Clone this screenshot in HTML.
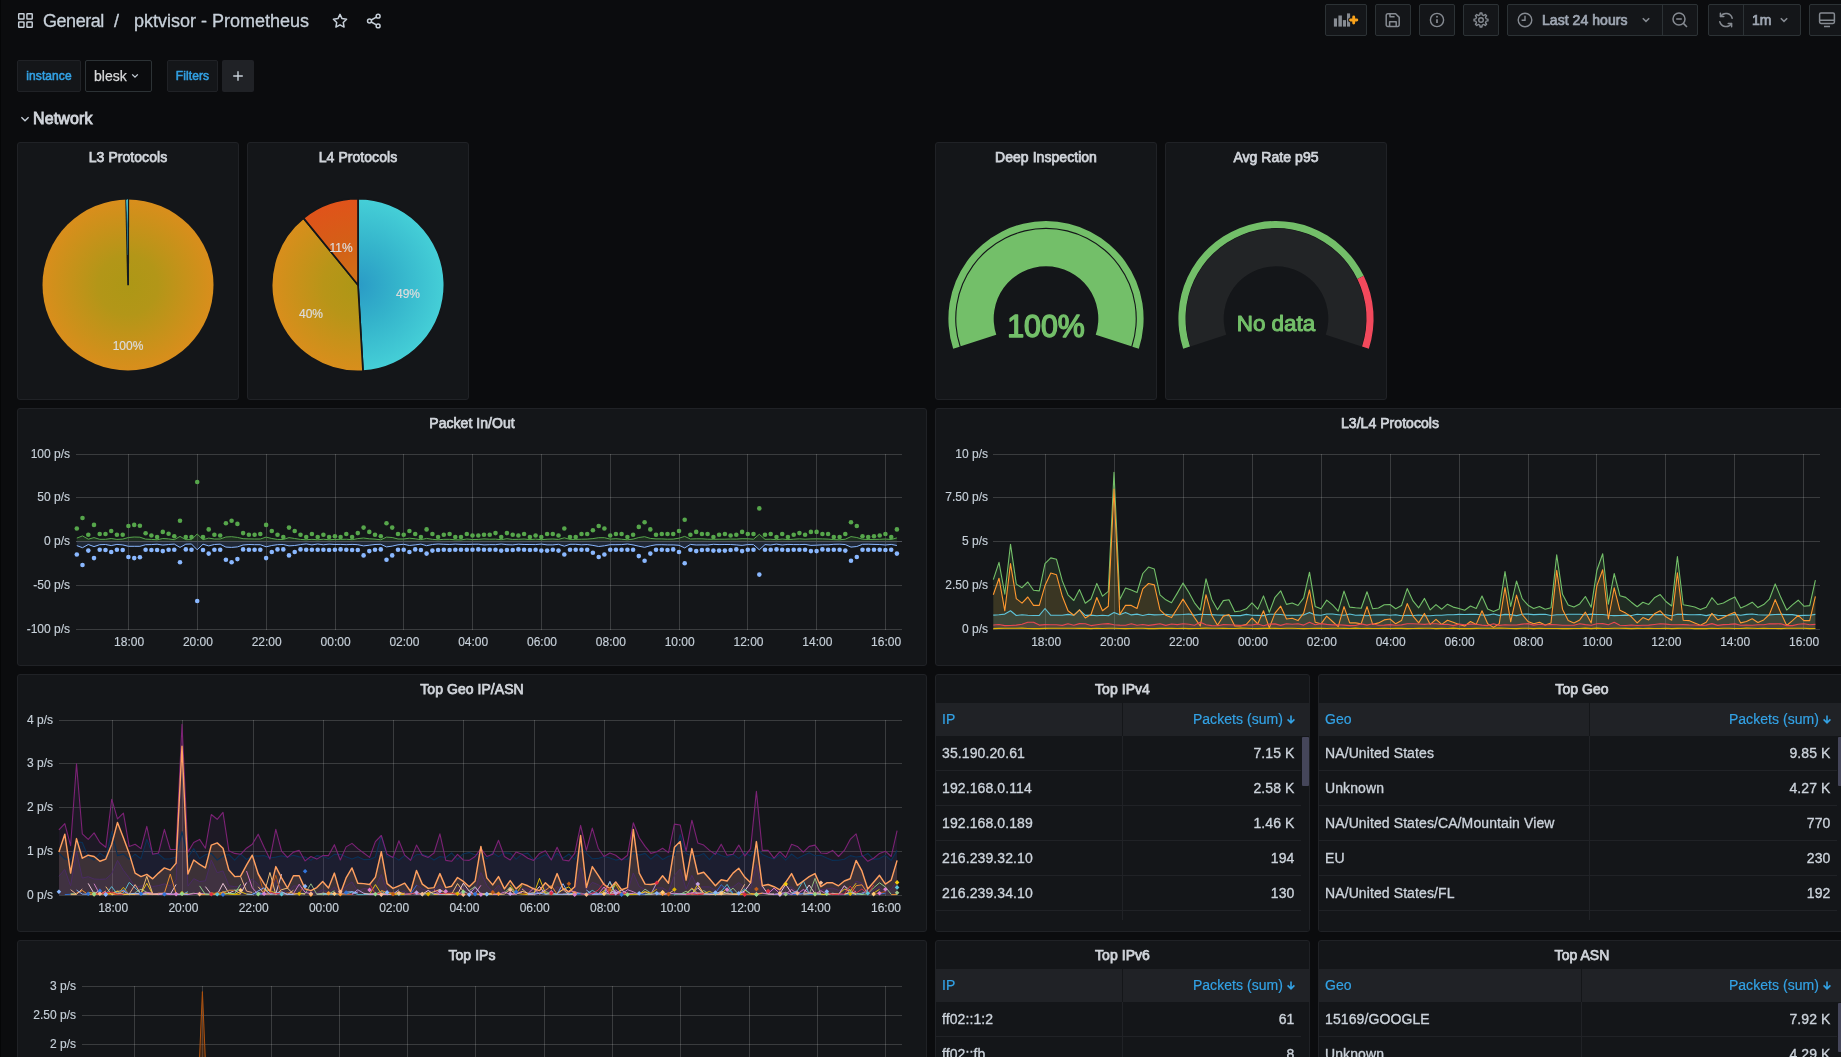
<!DOCTYPE html><html><head><meta charset="utf-8"><title>pktvisor - Prometheus - Grafana</title><style>
*{box-sizing:border-box;margin:0;padding:0}
html,body{width:1841px;height:1057px;overflow:hidden;background:#0b0c0e;font-family:"Liberation Sans", sans-serif;color:#c7d0d9}
#root{position:relative;width:1841px;height:1057px;overflow:hidden;background:#0b0c0e;will-change:transform}
.abs{position:absolute}
.panel{position:absolute;background:#141619;border:1px solid #202226;border-radius:3px;overflow:hidden}
.ptitle{position:absolute;left:0;right:0;top:0;height:28px;line-height:29px;text-align:center;font-size:14px;color:#d0d4da;-webkit-text-stroke:0.75px #d0d4da;letter-spacing:0.05px}
.tbtn{position:absolute;top:4px;height:32px;background:#141619;border:1px solid #2c3235;border-radius:2px}
svg{position:absolute;left:0;top:0;overflow:visible}
svg text{font-family:"Liberation Sans", sans-serif}
.ax{font-size:12px;fill:#c7d0d9;stroke:#c7d0d9;stroke-width:0.15px}
.th{position:absolute;height:33px;line-height:33px;background:#202226;color:#33a2e5;-webkit-text-stroke:0.2px #33a2e5;letter-spacing:0.05px;font-size:14px;white-space:nowrap}
.td{position:absolute;height:35px;line-height:34px;font-size:14px;color:#ccd3db;-webkit-text-stroke:0.33px #ccd3db;letter-spacing:0.1px;border-bottom:1px solid #202226;white-space:nowrap;overflow:hidden}
.r{text-align:right}
</style></head><body><div id="root">
<div class="abs" style="left:0;top:0;width:1px;height:1057px;background:#050607"></div>
<svg width="17.4" height="17.4" style="left:17.3px;top:11.9px" viewBox="0 0 18 18" fill="none" stroke="#c7d0d9" stroke-width="1.5">
<rect x="1.75" y="1.75" width="5.5" height="5.5" rx="0.6"/><rect x="10.25" y="1.75" width="5.5" height="5.5" rx="0.6"/>
<rect x="1.75" y="10.25" width="5.5" height="5.5" rx="0.6"/><rect x="10.25" y="10.25" width="5.5" height="5.5" rx="0.6"/></svg>
<div class="abs" style="left:43px;top:10px;height:22px;line-height:22px;font-size:18px;color:#c7d0d9;-webkit-text-stroke:0.3px #c7d0d9;white-space:nowrap"><span style="letter-spacing:-0.45px">General</span></div>
<div class="abs" style="left:114px;top:10px;height:22px;line-height:22px;font-size:18px;color:#c7d0d9;-webkit-text-stroke:0.3px #c7d0d9;white-space:nowrap">/</div>
<div class="abs" style="left:134px;top:10px;height:22px;line-height:22px;font-size:18px;color:#c7d0d9;-webkit-text-stroke:0.3px #c7d0d9;white-space:nowrap">pktvisor - Prometheus</div>
<svg width="18" height="18" style="left:331px;top:12px" viewBox="0 0 24 24" fill="none" stroke="#c7d0d9" stroke-width="2" stroke-linejoin="round"><path d="M12 3.2l2.7 5.6 6.1.85-4.45 4.3 1.07 6.1L12 17.15 6.58 20.05l1.07-6.1L3.2 9.65l6.1-.85z"/></svg>
<svg width="18" height="18" style="left:365px;top:12px" viewBox="0 0 24 24" fill="none" stroke="#c7d0d9" stroke-width="2"><circle cx="17.5" cy="5.5" r="2.6"/><circle cx="6" cy="12" r="2.6"/><circle cx="17.5" cy="18.5" r="2.6"/><path d="M8.3 10.7l6.9-3.9M8.3 13.3l6.9 3.9"/></svg>
<div class="tbtn" style="left:1325px;width:42px"></div>
<div class="tbtn" style="left:1375px;width:36px"></div>
<div class="tbtn" style="left:1419px;width:36px"></div>
<div class="tbtn" style="left:1463px;width:36px"></div>
<div class="tbtn" style="left:1507px;width:191px"></div>
<div class="tbtn" style="left:1708px;width:93px"></div>
<div class="tbtn" style="left:1809px;width:40px"></div>
<div class="abs" style="left:1662px;top:5px;width:1px;height:30px;background:#2c3235"></div>
<div class="abs" style="left:1743px;top:5px;width:1px;height:30px;background:#2c3235"></div>
<svg width="28" height="16" style="left:1333px;top:12px" viewBox="0 0 28 16"><g fill="#868b92"><rect x="0.9" y="6.4" width="3.1" height="8.2"/><rect x="5.4" y="3.5" width="3.5" height="11.1"/><rect x="9.9" y="8.1" width="3.1" height="6.5"/><rect x="14" y="1.4" width="3.1" height="13.2"/></g>
<path d="M20.7 4.9v6.2M17.6 8h6.2" stroke="#141619" stroke-width="5" stroke-linecap="round"/><path d="M20.7 4.9v6.2M17.6 8h6.2" stroke="#f9a21b" stroke-width="2.9" stroke-linecap="round"/></svg>
<svg width="16" height="16" style="left:1385px;top:12px" viewBox="0 0 16 16" fill="none" stroke="#868b92" stroke-width="1.5" stroke-linejoin="round"><path d="M2.6 1.8h8l3.6 3.6v7.4a1.6 1.6 0 0 1-1.6 1.6H2.8a1.6 1.6 0 0 1-1.6-1.6V3.4a1.6 1.6 0 0 1 1.6-1.6z"/><path d="M4.6 14.2v-4.4h6.6v4.4M5 1.9v2.9h4.6"/></svg>
<svg width="18" height="18" style="left:1428px;top:11px" viewBox="0 0 18 18" fill="none" stroke="#868b92" stroke-width="1.4"><circle cx="9" cy="9" r="6.6"/><path d="M9 8.3v3.8" stroke-width="1.7"/><circle cx="9" cy="5.8" r="0.95" fill="#868b92" stroke="none"/></svg>
<svg width="18" height="18" style="left:1472px;top:11px" viewBox="0 0 18 18" fill="none" stroke="#868b92" stroke-width="1.4" stroke-linejoin="round"><path d="M7.84 3.83 L8.07 2.06 L9.93 2.06 L10.16 3.83 L11.84 4.53 L13.25 3.44 L14.56 4.75 L13.47 6.16 L14.17 7.84 L15.94 8.07 L15.94 9.93 L14.17 10.16 L13.47 11.84 L14.56 13.25 L13.25 14.56 L11.84 13.47 L10.16 14.17 L9.93 15.94 L8.07 15.94 L7.84 14.17 L6.16 13.47 L4.75 14.56 L3.44 13.25 L4.53 11.84 L3.83 10.16 L2.06 9.93 L2.06 8.07 L3.83 7.84 L4.53 6.16 L3.44 4.75 L4.75 3.44 L6.16 4.53Z"/><circle cx="9" cy="9" r="2.3"/></svg>
<svg width="16" height="16" style="left:1517px;top:12px" viewBox="0 0 16 16" fill="none" stroke="#868b92" stroke-width="1.4"><circle cx="8" cy="8" r="6.8"/><path d="M8 3.8v4.4H4.6"/></svg>
<div class="abs" style="left:1542px;top:4px;height:32px;line-height:32px;font-size:14px;color:#9fa7b3;-webkit-text-stroke:0.7px #9fa7b3;white-space:nowrap;letter-spacing:0.05px">Last 24 hours</div>
<svg width="10" height="8" style="left:1641px;top:16px" viewBox="0 0 10 8" fill="none" stroke="#868b92" stroke-width="1.5"><path d="M1.8 2.2L5 5.4l3.2-3.2"/></svg>
<svg width="18" height="18" style="left:1671px;top:11px" viewBox="0 0 18 18" fill="none" stroke="#868b92" stroke-width="1.5"><circle cx="8" cy="8" r="6"/><path d="M5.2 8h5.6M12.4 12.4l3.6 3.6"/></svg>
<svg width="18" height="18" style="left:1717px;top:11px" viewBox="0 0 18 18" fill="none" stroke="#868b92" stroke-width="1.5" stroke-linecap="round" stroke-linejoin="round"><path d="M15.2 7.2A6.4 6.4 0 0 0 3.6 5.4M2.8 10.8a6.4 6.4 0 0 0 11.6 1.8"/><path d="M3.4 2.2v3.4h3.4M14.6 15.8v-3.4h-3.4"/></svg>
<div class="abs" style="left:1752px;top:4px;height:32px;line-height:32px;font-size:14px;color:#9fa7b3;-webkit-text-stroke:0.7px #9fa7b3;white-space:nowrap">1m</div>
<svg width="10" height="8" style="left:1779px;top:16px" viewBox="0 0 10 8" fill="none" stroke="#868b92" stroke-width="1.5"><path d="M1.8 2.2L5 5.4l3.2-3.2"/></svg>
<svg width="18" height="18" style="left:1818px;top:11px" viewBox="0 0 18 18" fill="none" stroke="#868b92" stroke-width="1.5" stroke-linejoin="round"><rect x="1.6" y="2" width="14.8" height="10.4" rx="1.4"/><path d="M1.6 9.2h14.8M6 15.6h6"/></svg>
<div class="abs" style="left:17px;top:60px;width:64px;height:32px;background:#141619;border:1px solid #202226;border-radius:2px;line-height:30px;text-align:center;font-size:12px;color:#33a2e5;-webkit-text-stroke:0.55px #33a2e5;letter-spacing:0.1px">instance</div>
<div class="abs" style="left:85px;top:60px;width:67px;height:32px;background:#0b0c0e;border:1px solid #2c3235;border-radius:2px;line-height:30px;padding-left:8px;font-size:14px;color:#d8d9da;-webkit-text-stroke:0.25px #d8d9da">blesk</div>
<svg width="10" height="8" style="left:130px;top:72px" viewBox="0 0 10 8" fill="none" stroke="#c7d0d9" stroke-width="1.3"><path d="M2.2 2.4L5 5.2l2.8-2.8"/></svg>
<div class="abs" style="left:167px;top:60px;width:51px;height:32px;background:#141619;border:1px solid #202226;border-radius:2px;line-height:30px;text-align:center;font-size:12px;color:#33a2e5;-webkit-text-stroke:0.55px #33a2e5;letter-spacing:0.1px">Filters</div>
<div class="abs" style="left:222px;top:60px;width:32px;height:32px;background:#202226;border-radius:2px"></div>
<svg width="12" height="12" style="left:232px;top:70px" viewBox="0 0 12 12" fill="none" stroke="#c7d0d9" stroke-width="1.4"><path d="M6 1.2v9.6M1.2 6h9.6"/></svg>
<svg width="12" height="8" style="left:19px;top:115px" viewBox="0 0 12 8" fill="none" stroke="#c7d0d9" stroke-width="1.3"><path d="M2.4 2.2L6 5.8l3.6-3.6"/></svg>
<div class="abs" style="left:33px;top:109px;height:20px;line-height:20px;font-size:16px;color:#d0d4da;-webkit-text-stroke:0.85px #d0d4da;letter-spacing:0.15px;white-space:nowrap">Network</div>
<div class="panel" style="left:17px;top:142px;width:222px;height:258px"><div class="ptitle">L3 Protocols</div><svg width="220" height="256"><defs><radialGradient id="gy" cx="110" cy="142" r="85.5" gradientUnits="userSpaceOnUse"><stop offset="0" stop-color="#ad9716"/><stop offset="0.35" stop-color="#b39618"/><stop offset="1" stop-color="#d98e1c"/></radialGradient></defs><circle cx="110" cy="142" r="85.5" fill="url(#gy)"/><path d="M109.2 142.3 L107.25 55.5 L111.15 55.5 L111.0 142.3Z" fill="#141a1f"/><path d="M108.3 57.1 L109.9 56.2 L109.85 112 L109.45 112Z" fill="#2a8599"/><path d="M108.3 57.1 L109.8 56.2 L109.65 82Z" fill="#4cc9d8"/><text x="110" y="206.5" text-anchor="middle" font-size="12" fill="#dcdcdc" stroke="#dcdcdc" stroke-width="0.2">100%</text></svg></div>
<div class="panel" style="left:247px;top:142px;width:222px;height:258px"><div class="ptitle">L4 Protocols</div><svg width="220" height="256"><defs><radialGradient id="gb" cx="110" cy="142" r="86.3" gradientUnits="userSpaceOnUse"><stop offset="0" stop-color="#2a9bc6"/><stop offset="0.45" stop-color="#34b3cb"/><stop offset="1" stop-color="#45cfd7"/></radialGradient><radialGradient id="gy2" cx="110" cy="142" r="86.3" gradientUnits="userSpaceOnUse"><stop offset="0" stop-color="#ad9716"/><stop offset="0.4" stop-color="#b89518"/><stop offset="1" stop-color="#d98e1c"/></radialGradient><radialGradient id="go" cx="110" cy="142" r="86.3" gradientUnits="userSpaceOnUse"><stop offset="0" stop-color="#cf7317"/><stop offset="0.5" stop-color="#d45f17"/><stop offset="1" stop-color="#e0531a"/></radialGradient></defs><path d="M110 142 L110.00 55.70 A86.3 86.3 0 0 1 114.99 228.16Z" fill="url(#gb)" stroke="#141619" stroke-width="1.7" stroke-linejoin="round"/><path d="M110 142 L114.99 228.16 A86.3 86.3 0 0 1 55.49 75.09Z" fill="url(#gy2)" stroke="#141619" stroke-width="1.7" stroke-linejoin="round"/><path d="M110 142 L55.49 75.09 A86.3 86.3 0 0 1 110.00 55.70Z" fill="url(#go)" stroke="#141619" stroke-width="1.7" stroke-linejoin="round"/><text x="160" y="154.5" text-anchor="middle" font-size="12" fill="#dcdcdc" stroke="#dcdcdc" stroke-width="0.2">49%</text><text x="63" y="174.5" text-anchor="middle" font-size="12" fill="#dcdcdc" stroke="#dcdcdc" stroke-width="0.2">40%</text><text x="93" y="108.5" text-anchor="middle" font-size="12" fill="#dcdcdc" stroke="#dcdcdc" stroke-width="0.2">11%</text></svg></div>
<div class="panel" style="left:935px;top:142px;width:222px;height:258px"><div class="ptitle">Deep Inspection</div><svg width="220" height="256"><path d="M17.18 205.76 A97.6 97.6 0 1 1 202.82 205.76 L196.36 203.66 A90.8 90.8 0 1 0 23.64 203.66Z" fill="#73bf69"/><path d="M24.69 203.32 A89.7 89.7 0 1 1 195.31 203.32 L159.74 191.76 A52.3 52.3 0 1 0 60.26 191.76Z" fill="#73bf69"/><text x="110" y="194.2" text-anchor="middle" font-size="32" fill="#73bf69" stroke="#73bf69" stroke-width="1.50" stroke-linejoin="round" textLength="77.5" lengthAdjust="spacingAndGlyphs">100%</text></svg></div>
<div class="panel" style="left:1165px;top:142px;width:222px;height:258px"><div class="ptitle">Avg Rate p95</div><svg width="220" height="256"><path d="M17.18 205.76 A97.6 97.6 0 0 1 197.72 132.81 L191.34 135.93 A90.5 90.5 0 0 0 23.93 203.57Z" fill="#73bf69"/><path d="M197.72 132.81 A97.6 97.6 0 0 1 202.82 205.76 L196.07 203.57 A90.5 90.5 0 0 0 191.34 135.93Z" fill="#f2495c"/><path d="M24.40 203.41 A90.0 90.0 0 1 1 195.60 203.41 L159.74 191.76 A52.3 52.3 0 1 0 60.26 191.76Z" fill="#222426"/><text x="110" y="187.9" text-anchor="middle" font-size="22" fill="#73bf69" stroke="#73bf69" stroke-width="1.03" stroke-linejoin="round" textLength="78.6" lengthAdjust="spacingAndGlyphs">No data</text></svg></div>
<div class="panel" style="left:17px;top:408px;width:910px;height:258px"><div class="ptitle">Packet In/Out</div><svg width="908" height="256"><rect x="110" y="45" width="1" height="176" fill="#ffffff" fill-opacity="0.165"/><rect x="179" y="45" width="1" height="176" fill="#ffffff" fill-opacity="0.165"/><rect x="248" y="45" width="1" height="176" fill="#ffffff" fill-opacity="0.165"/><rect x="317" y="45" width="1" height="176" fill="#ffffff" fill-opacity="0.165"/><rect x="385" y="45" width="1" height="176" fill="#ffffff" fill-opacity="0.165"/><rect x="454" y="45" width="1" height="176" fill="#ffffff" fill-opacity="0.165"/><rect x="523" y="45" width="1" height="176" fill="#ffffff" fill-opacity="0.165"/><rect x="592" y="45" width="1" height="176" fill="#ffffff" fill-opacity="0.165"/><rect x="661" y="45" width="1" height="176" fill="#ffffff" fill-opacity="0.165"/><rect x="729" y="45" width="1" height="176" fill="#ffffff" fill-opacity="0.165"/><rect x="798" y="45" width="1" height="176" fill="#ffffff" fill-opacity="0.165"/><rect x="867" y="45" width="1" height="176" fill="#ffffff" fill-opacity="0.165"/><rect x="58" y="45" width="826" height="1" fill="#ffffff" fill-opacity="0.165"/><rect x="58" y="88" width="826" height="1" fill="#ffffff" fill-opacity="0.165"/><rect x="58" y="132" width="826" height="1" fill="#ffffff" fill-opacity="0.165"/><rect x="58" y="176" width="826" height="1" fill="#ffffff" fill-opacity="0.165"/><rect x="58" y="220" width="826" height="1" fill="#ffffff" fill-opacity="0.165"/><text class="ax" x="111.1" y="237" text-anchor="middle">18:00</text><text class="ax" x="179.9" y="237" text-anchor="middle">20:00</text><text class="ax" x="248.7" y="237" text-anchor="middle">22:00</text><text class="ax" x="317.6" y="237" text-anchor="middle">00:00</text><text class="ax" x="386.4" y="237" text-anchor="middle">02:00</text><text class="ax" x="455.2" y="237" text-anchor="middle">04:00</text><text class="ax" x="524.0" y="237" text-anchor="middle">06:00</text><text class="ax" x="592.8" y="237" text-anchor="middle">08:00</text><text class="ax" x="661.7" y="237" text-anchor="middle">10:00</text><text class="ax" x="730.5" y="237" text-anchor="middle">12:00</text><text class="ax" x="799.3" y="237" text-anchor="middle">14:00</text><text class="ax" x="868.1" y="237" text-anchor="middle">16:00</text><text class="ax" x="52" y="49.3" text-anchor="end">100 p/s</text><text class="ax" x="52" y="92.3" text-anchor="end">50 p/s</text><text class="ax" x="52" y="136.3" text-anchor="end">0 p/s</text><text class="ax" x="52" y="180.3" text-anchor="end">-50 p/s</text><text class="ax" x="52" y="224.3" text-anchor="end">-100 p/s</text><polygon points="58.8,132.5 58.8,129.1 64.5,126.9 70.3,130.2 76.0,128.6 81.7,130.3 87.5,130.3 93.2,129.5 98.9,130.4 104.7,130.1 110.4,128.5 116.2,128.0 121.9,128.2 127.6,130.1 133.4,130.4 139.1,130.8 144.8,129.5 150.6,129.9 156.3,130.7 162.0,127.4 167.8,130.7 173.5,130.6 179.2,125.0 185.0,130.7 190.7,129.1 196.4,130.0 202.2,130.0 207.9,128.0 213.6,127.7 219.4,128.4 225.1,129.7 230.9,129.9 236.6,130.0 242.3,130.0 248.1,128.1 253.8,129.5 259.5,130.4 265.3,130.5 271.0,128.6 276.7,129.5 282.5,130.4 288.2,130.8 293.9,130.3 299.7,130.8 305.4,130.2 311.1,130.8 316.9,130.4 322.6,130.4 328.3,130.2 334.1,130.7 339.8,129.6 345.6,129.0 351.3,129.8 357.0,130.1 362.8,130.8 368.5,128.1 374.2,128.5 380.0,130.0 385.7,130.0 391.4,129.2 397.2,129.8 402.9,130.7 408.6,129.4 414.4,130.3 420.1,130.8 425.8,130.3 431.6,130.3 437.3,130.8 443.0,130.9 448.8,130.0 454.5,130.5 460.3,130.4 466.0,129.9 471.7,130.2 477.5,130.1 483.2,130.7 488.9,129.7 494.7,130.4 500.4,130.3 506.1,130.0 511.9,130.6 517.6,130.1 523.3,130.7 529.1,130.2 534.8,130.0 540.5,130.4 546.3,128.8 552.0,130.4 557.7,130.4 563.5,130.2 569.2,130.1 574.9,129.6 580.7,128.7 586.4,128.7 592.2,130.1 597.9,129.7 603.6,130.2 609.4,130.8 615.1,130.1 620.8,128.5 626.6,127.7 632.3,129.4 638.0,129.9 643.8,129.9 649.5,130.2 655.2,130.1 661.0,129.2 666.7,127.4 672.4,130.0 678.2,129.8 683.9,129.8 689.6,130.2 695.4,130.3 701.1,130.2 706.9,130.2 712.6,130.0 718.3,130.1 724.1,129.7 729.8,129.8 735.5,130.2 741.3,125.3 747.0,130.3 752.7,130.2 758.5,130.7 764.2,130.0 769.9,130.6 775.7,130.2 781.4,129.8 787.1,130.2 792.9,129.9 798.6,129.8 804.4,129.9 810.1,130.1 815.8,130.6 821.6,130.8 827.3,130.2 833.0,127.6 838.8,128.5 844.5,130.2 850.2,130.5 856.0,130.4 861.7,130.3 867.4,130.0 873.2,130.5 878.9,128.9 878.9,132.5" fill="#56a64b" fill-opacity="0.16"/><polygon points="58.8,132.5 58.8,136.6 64.5,138.7 70.3,135.5 76.0,137.6 81.7,135.7 87.5,135.5 93.2,136.6 98.9,135.4 104.7,135.9 110.4,137.3 116.2,137.3 121.9,137.3 127.6,135.7 133.4,135.6 139.1,135.2 144.8,136.1 150.6,135.5 156.3,135.1 162.0,138.4 167.8,135.2 173.5,135.0 179.2,140.8 185.0,135.2 190.7,136.9 196.4,135.5 202.2,135.2 207.9,138.1 213.6,138.4 219.4,137.9 225.1,136.0 230.9,135.5 236.6,135.7 242.3,135.7 248.1,137.8 253.8,136.5 259.5,135.7 265.3,135.5 271.0,136.9 276.7,136.5 282.5,135.6 288.2,134.9 293.9,135.9 299.7,135.0 305.4,135.8 311.1,135.1 316.9,135.5 322.6,135.4 328.3,135.7 334.1,135.4 339.8,135.7 345.6,136.9 351.3,136.2 357.0,135.5 362.8,135.3 368.5,137.9 374.2,137.1 380.0,135.8 385.7,135.3 391.4,136.5 397.2,135.9 402.9,135.1 408.6,136.7 414.4,135.5 420.1,135.0 425.8,135.3 431.6,135.5 437.3,135.1 443.0,135.4 448.8,135.5 454.5,135.3 460.3,135.2 466.0,135.9 471.7,135.6 477.5,135.7 483.2,135.0 488.9,135.7 494.7,135.9 500.4,135.2 506.1,135.5 511.9,135.5 517.6,135.6 523.3,135.1 529.1,135.9 534.8,135.9 540.5,135.3 546.3,137.2 552.0,135.3 557.7,135.3 563.5,135.8 569.2,135.5 574.9,136.4 580.7,137.5 586.4,136.8 592.2,135.7 597.9,135.7 603.6,135.6 609.4,135.0 615.1,135.9 620.8,137.2 626.6,138.3 632.3,136.8 638.0,135.8 643.8,135.7 649.5,135.9 655.2,135.9 661.0,136.3 666.7,138.9 672.4,135.4 678.2,136.0 683.9,135.9 689.6,136.0 695.4,135.3 701.1,135.6 706.9,135.5 712.6,135.5 718.3,135.9 724.1,136.4 729.8,135.6 735.5,135.6 741.3,140.8 747.0,135.6 752.7,136.0 758.5,135.1 764.2,136.0 769.9,135.4 775.7,135.6 781.4,135.6 787.1,135.4 792.9,136.4 798.6,136.2 804.4,135.8 810.1,135.8 815.8,135.3 821.6,135.2 827.3,135.6 833.0,138.1 838.8,137.5 844.5,135.3 850.2,135.2 856.0,135.4 861.7,135.5 867.4,136.0 873.2,135.4 878.9,136.5 878.9,132.5" fill="#5e8fd6" fill-opacity="0.15"/><rect x="58" y="132" width="826" height="1" fill="#50545c"/><polyline points="58.8,129.1 64.5,126.9 70.3,130.2 76.0,128.6 81.7,130.3 87.5,130.3 93.2,129.5 98.9,130.4 104.7,130.1 110.4,128.5 116.2,128.0 121.9,128.2 127.6,130.1 133.4,130.4 139.1,130.8 144.8,129.5 150.6,129.9 156.3,130.7 162.0,127.4 167.8,130.7 173.5,130.6 179.2,125.0 185.0,130.7 190.7,129.1 196.4,130.0 202.2,130.0 207.9,128.0 213.6,127.7 219.4,128.4 225.1,129.7 230.9,129.9 236.6,130.0 242.3,130.0 248.1,128.1 253.8,129.5 259.5,130.4 265.3,130.5 271.0,128.6 276.7,129.5 282.5,130.4 288.2,130.8 293.9,130.3 299.7,130.8 305.4,130.2 311.1,130.8 316.9,130.4 322.6,130.4 328.3,130.2 334.1,130.7 339.8,129.6 345.6,129.0 351.3,129.8 357.0,130.1 362.8,130.8 368.5,128.1 374.2,128.5 380.0,130.0 385.7,130.0 391.4,129.2 397.2,129.8 402.9,130.7 408.6,129.4 414.4,130.3 420.1,130.8 425.8,130.3 431.6,130.3 437.3,130.8 443.0,130.9 448.8,130.0 454.5,130.5 460.3,130.4 466.0,129.9 471.7,130.2 477.5,130.1 483.2,130.7 488.9,129.7 494.7,130.4 500.4,130.3 506.1,130.0 511.9,130.6 517.6,130.1 523.3,130.7 529.1,130.2 534.8,130.0 540.5,130.4 546.3,128.8 552.0,130.4 557.7,130.4 563.5,130.2 569.2,130.1 574.9,129.6 580.7,128.7 586.4,128.7 592.2,130.1 597.9,129.7 603.6,130.2 609.4,130.8 615.1,130.1 620.8,128.5 626.6,127.7 632.3,129.4 638.0,129.9 643.8,129.9 649.5,130.2 655.2,130.1 661.0,129.2 666.7,127.4 672.4,130.0 678.2,129.8 683.9,129.8 689.6,130.2 695.4,130.3 701.1,130.2 706.9,130.2 712.6,130.0 718.3,130.1 724.1,129.7 729.8,129.8 735.5,130.2 741.3,125.3 747.0,130.3 752.7,130.2 758.5,130.7 764.2,130.0 769.9,130.6 775.7,130.2 781.4,129.8 787.1,130.2 792.9,129.9 798.6,129.8 804.4,129.9 810.1,130.1 815.8,130.6 821.6,130.8 827.3,130.2 833.0,127.6 838.8,128.5 844.5,130.2 850.2,130.5 856.0,130.4 861.7,130.3 867.4,130.0 873.2,130.5 878.9,128.9" fill="none" stroke="#56a64b" stroke-width="1" stroke-opacity="1" stroke-linejoin="round"/><polyline points="58.8,136.6 64.5,138.7 70.3,135.5 76.0,137.6 81.7,135.7 87.5,135.5 93.2,136.6 98.9,135.4 104.7,135.9 110.4,137.3 116.2,137.3 121.9,137.3 127.6,135.7 133.4,135.6 139.1,135.2 144.8,136.1 150.6,135.5 156.3,135.1 162.0,138.4 167.8,135.2 173.5,135.0 179.2,140.8 185.0,135.2 190.7,136.9 196.4,135.5 202.2,135.2 207.9,138.1 213.6,138.4 219.4,137.9 225.1,136.0 230.9,135.5 236.6,135.7 242.3,135.7 248.1,137.8 253.8,136.5 259.5,135.7 265.3,135.5 271.0,136.9 276.7,136.5 282.5,135.6 288.2,134.9 293.9,135.9 299.7,135.0 305.4,135.8 311.1,135.1 316.9,135.5 322.6,135.4 328.3,135.7 334.1,135.4 339.8,135.7 345.6,136.9 351.3,136.2 357.0,135.5 362.8,135.3 368.5,137.9 374.2,137.1 380.0,135.8 385.7,135.3 391.4,136.5 397.2,135.9 402.9,135.1 408.6,136.7 414.4,135.5 420.1,135.0 425.8,135.3 431.6,135.5 437.3,135.1 443.0,135.4 448.8,135.5 454.5,135.3 460.3,135.2 466.0,135.9 471.7,135.6 477.5,135.7 483.2,135.0 488.9,135.7 494.7,135.9 500.4,135.2 506.1,135.5 511.9,135.5 517.6,135.6 523.3,135.1 529.1,135.9 534.8,135.9 540.5,135.3 546.3,137.2 552.0,135.3 557.7,135.3 563.5,135.8 569.2,135.5 574.9,136.4 580.7,137.5 586.4,136.8 592.2,135.7 597.9,135.7 603.6,135.6 609.4,135.0 615.1,135.9 620.8,137.2 626.6,138.3 632.3,136.8 638.0,135.8 643.8,135.7 649.5,135.9 655.2,135.9 661.0,136.3 666.7,138.9 672.4,135.4 678.2,136.0 683.9,135.9 689.6,136.0 695.4,135.3 701.1,135.6 706.9,135.5 712.6,135.5 718.3,135.9 724.1,136.4 729.8,135.6 735.5,135.6 741.3,140.8 747.0,135.6 752.7,136.0 758.5,135.1 764.2,136.0 769.9,135.4 775.7,135.6 781.4,135.6 787.1,135.4 792.9,136.4 798.6,136.2 804.4,135.8 810.1,135.8 815.8,135.3 821.6,135.2 827.3,135.6 833.0,138.1 838.8,137.5 844.5,135.3 850.2,135.2 856.0,135.4 861.7,135.5 867.4,136.0 873.2,135.4 878.9,136.5" fill="none" stroke="#8ab8ff" stroke-width="1" stroke-opacity="1" stroke-linejoin="round"/><circle cx="58.8" cy="119.5" r="2.3" fill="#56a64b"/><circle cx="58.8" cy="145.5" r="2.3" fill="#8ab8ff"/><circle cx="64.5" cy="109.0" r="2.3" fill="#56a64b"/><circle cx="64.5" cy="156.0" r="2.3" fill="#8ab8ff"/><circle cx="70.3" cy="125.8" r="2.3" fill="#56a64b"/><circle cx="70.3" cy="141.6" r="2.3" fill="#8ab8ff"/><circle cx="76.0" cy="115.9" r="2.3" fill="#56a64b"/><circle cx="76.0" cy="149.1" r="2.3" fill="#8ab8ff"/><circle cx="81.7" cy="125.0" r="2.3" fill="#56a64b"/><circle cx="81.7" cy="140.7" r="2.3" fill="#8ab8ff"/><circle cx="87.5" cy="125.0" r="2.3" fill="#56a64b"/><circle cx="87.5" cy="141.0" r="2.3" fill="#8ab8ff"/><circle cx="93.2" cy="122.0" r="2.3" fill="#56a64b"/><circle cx="93.2" cy="143.0" r="2.3" fill="#8ab8ff"/><circle cx="98.9" cy="125.7" r="2.3" fill="#56a64b"/><circle cx="98.9" cy="140.7" r="2.3" fill="#8ab8ff"/><circle cx="104.7" cy="125.7" r="2.3" fill="#56a64b"/><circle cx="104.7" cy="141.0" r="2.3" fill="#8ab8ff"/><circle cx="110.4" cy="117.0" r="2.3" fill="#56a64b"/><circle cx="110.4" cy="148.0" r="2.3" fill="#8ab8ff"/><circle cx="116.2" cy="115.9" r="2.3" fill="#56a64b"/><circle cx="116.2" cy="149.1" r="2.3" fill="#8ab8ff"/><circle cx="121.9" cy="116.8" r="2.3" fill="#56a64b"/><circle cx="121.9" cy="148.2" r="2.3" fill="#8ab8ff"/><circle cx="127.6" cy="124.3" r="2.3" fill="#56a64b"/><circle cx="127.6" cy="140.7" r="2.3" fill="#8ab8ff"/><circle cx="133.4" cy="126.5" r="2.3" fill="#56a64b"/><circle cx="133.4" cy="141.0" r="2.3" fill="#8ab8ff"/><circle cx="139.1" cy="128.0" r="2.3" fill="#56a64b"/><circle cx="139.1" cy="141.0" r="2.3" fill="#8ab8ff"/><circle cx="144.8" cy="122.9" r="2.3" fill="#56a64b"/><circle cx="144.8" cy="142.1" r="2.3" fill="#8ab8ff"/><circle cx="150.6" cy="124.7" r="2.3" fill="#56a64b"/><circle cx="150.6" cy="140.7" r="2.3" fill="#8ab8ff"/><circle cx="156.3" cy="127.2" r="2.3" fill="#56a64b"/><circle cx="156.3" cy="140.7" r="2.3" fill="#8ab8ff"/><circle cx="162.0" cy="111.8" r="2.3" fill="#56a64b"/><circle cx="162.0" cy="153.2" r="2.3" fill="#8ab8ff"/><circle cx="167.8" cy="128.0" r="2.3" fill="#56a64b"/><circle cx="167.8" cy="140.4" r="2.3" fill="#8ab8ff"/><circle cx="173.5" cy="128.0" r="2.3" fill="#56a64b"/><circle cx="173.5" cy="140.7" r="2.3" fill="#8ab8ff"/><circle cx="179.2" cy="73.0" r="2.3" fill="#56a64b"/><circle cx="179.2" cy="192.0" r="2.3" fill="#8ab8ff"/><circle cx="185.0" cy="128.0" r="2.3" fill="#56a64b"/><circle cx="185.0" cy="141.0" r="2.3" fill="#8ab8ff"/><circle cx="190.7" cy="120.4" r="2.3" fill="#56a64b"/><circle cx="190.7" cy="144.6" r="2.3" fill="#8ab8ff"/><circle cx="196.4" cy="125.7" r="2.3" fill="#56a64b"/><circle cx="196.4" cy="140.7" r="2.3" fill="#8ab8ff"/><circle cx="202.2" cy="126.5" r="2.3" fill="#56a64b"/><circle cx="202.2" cy="140.7" r="2.3" fill="#8ab8ff"/><circle cx="207.9" cy="114.2" r="2.3" fill="#56a64b"/><circle cx="207.9" cy="150.8" r="2.3" fill="#8ab8ff"/><circle cx="213.6" cy="111.8" r="2.3" fill="#56a64b"/><circle cx="213.6" cy="153.2" r="2.3" fill="#8ab8ff"/><circle cx="219.4" cy="114.9" r="2.3" fill="#56a64b"/><circle cx="219.4" cy="150.1" r="2.3" fill="#8ab8ff"/><circle cx="225.1" cy="124.1" r="2.3" fill="#56a64b"/><circle cx="225.1" cy="140.4" r="2.3" fill="#8ab8ff"/><circle cx="230.9" cy="125.7" r="2.3" fill="#56a64b"/><circle cx="230.9" cy="140.7" r="2.3" fill="#8ab8ff"/><circle cx="236.6" cy="125.7" r="2.3" fill="#56a64b"/><circle cx="236.6" cy="140.7" r="2.3" fill="#8ab8ff"/><circle cx="242.3" cy="125.0" r="2.3" fill="#56a64b"/><circle cx="242.3" cy="140.7" r="2.3" fill="#8ab8ff"/><circle cx="248.1" cy="115.9" r="2.3" fill="#56a64b"/><circle cx="248.1" cy="149.1" r="2.3" fill="#8ab8ff"/><circle cx="253.8" cy="122.0" r="2.3" fill="#56a64b"/><circle cx="253.8" cy="143.0" r="2.3" fill="#8ab8ff"/><circle cx="259.5" cy="125.7" r="2.3" fill="#56a64b"/><circle cx="259.5" cy="140.4" r="2.3" fill="#8ab8ff"/><circle cx="265.3" cy="128.0" r="2.3" fill="#56a64b"/><circle cx="265.3" cy="140.4" r="2.3" fill="#8ab8ff"/><circle cx="271.0" cy="118.6" r="2.3" fill="#56a64b"/><circle cx="271.0" cy="146.4" r="2.3" fill="#8ab8ff"/><circle cx="276.7" cy="122.0" r="2.3" fill="#56a64b"/><circle cx="276.7" cy="143.0" r="2.3" fill="#8ab8ff"/><circle cx="282.5" cy="125.7" r="2.3" fill="#56a64b"/><circle cx="282.5" cy="140.4" r="2.3" fill="#8ab8ff"/><circle cx="288.2" cy="128.0" r="2.3" fill="#56a64b"/><circle cx="288.2" cy="140.7" r="2.3" fill="#8ab8ff"/><circle cx="293.9" cy="125.0" r="2.3" fill="#56a64b"/><circle cx="293.9" cy="140.7" r="2.3" fill="#8ab8ff"/><circle cx="299.7" cy="128.0" r="2.3" fill="#56a64b"/><circle cx="299.7" cy="140.7" r="2.3" fill="#8ab8ff"/><circle cx="305.4" cy="125.7" r="2.3" fill="#56a64b"/><circle cx="305.4" cy="140.7" r="2.3" fill="#8ab8ff"/><circle cx="311.1" cy="128.0" r="2.3" fill="#56a64b"/><circle cx="311.1" cy="141.0" r="2.3" fill="#8ab8ff"/><circle cx="316.9" cy="127.2" r="2.3" fill="#56a64b"/><circle cx="316.9" cy="140.7" r="2.3" fill="#8ab8ff"/><circle cx="322.6" cy="128.0" r="2.3" fill="#56a64b"/><circle cx="322.6" cy="140.4" r="2.3" fill="#8ab8ff"/><circle cx="328.3" cy="125.0" r="2.3" fill="#56a64b"/><circle cx="328.3" cy="140.7" r="2.3" fill="#8ab8ff"/><circle cx="334.1" cy="128.0" r="2.3" fill="#56a64b"/><circle cx="334.1" cy="141.0" r="2.3" fill="#8ab8ff"/><circle cx="339.8" cy="124.1" r="2.3" fill="#56a64b"/><circle cx="339.8" cy="141.0" r="2.3" fill="#8ab8ff"/><circle cx="345.6" cy="118.6" r="2.3" fill="#56a64b"/><circle cx="345.6" cy="146.4" r="2.3" fill="#8ab8ff"/><circle cx="351.3" cy="122.9" r="2.3" fill="#56a64b"/><circle cx="351.3" cy="142.1" r="2.3" fill="#8ab8ff"/><circle cx="357.0" cy="125.7" r="2.3" fill="#56a64b"/><circle cx="357.0" cy="140.7" r="2.3" fill="#8ab8ff"/><circle cx="362.8" cy="127.2" r="2.3" fill="#56a64b"/><circle cx="362.8" cy="140.4" r="2.3" fill="#8ab8ff"/><circle cx="368.5" cy="114.2" r="2.3" fill="#56a64b"/><circle cx="368.5" cy="150.8" r="2.3" fill="#8ab8ff"/><circle cx="374.2" cy="118.6" r="2.3" fill="#56a64b"/><circle cx="374.2" cy="146.4" r="2.3" fill="#8ab8ff"/><circle cx="380.0" cy="125.0" r="2.3" fill="#56a64b"/><circle cx="380.0" cy="140.7" r="2.3" fill="#8ab8ff"/><circle cx="385.7" cy="125.7" r="2.3" fill="#56a64b"/><circle cx="385.7" cy="140.7" r="2.3" fill="#8ab8ff"/><circle cx="391.4" cy="122.0" r="2.3" fill="#56a64b"/><circle cx="391.4" cy="143.0" r="2.3" fill="#8ab8ff"/><circle cx="397.2" cy="125.0" r="2.3" fill="#56a64b"/><circle cx="397.2" cy="140.4" r="2.3" fill="#8ab8ff"/><circle cx="402.9" cy="128.0" r="2.3" fill="#56a64b"/><circle cx="402.9" cy="141.0" r="2.3" fill="#8ab8ff"/><circle cx="408.6" cy="120.4" r="2.3" fill="#56a64b"/><circle cx="408.6" cy="144.6" r="2.3" fill="#8ab8ff"/><circle cx="414.4" cy="125.0" r="2.3" fill="#56a64b"/><circle cx="414.4" cy="141.6" r="2.3" fill="#8ab8ff"/><circle cx="420.1" cy="128.0" r="2.3" fill="#56a64b"/><circle cx="420.1" cy="141.0" r="2.3" fill="#8ab8ff"/><circle cx="425.8" cy="125.7" r="2.3" fill="#56a64b"/><circle cx="425.8" cy="140.7" r="2.3" fill="#8ab8ff"/><circle cx="431.6" cy="125.0" r="2.3" fill="#56a64b"/><circle cx="431.6" cy="141.0" r="2.3" fill="#8ab8ff"/><circle cx="437.3" cy="128.0" r="2.3" fill="#56a64b"/><circle cx="437.3" cy="140.7" r="2.3" fill="#8ab8ff"/><circle cx="443.0" cy="128.0" r="2.3" fill="#56a64b"/><circle cx="443.0" cy="140.7" r="2.3" fill="#8ab8ff"/><circle cx="448.8" cy="125.0" r="2.3" fill="#56a64b"/><circle cx="448.8" cy="140.7" r="2.3" fill="#8ab8ff"/><circle cx="454.5" cy="126.5" r="2.3" fill="#56a64b"/><circle cx="454.5" cy="140.7" r="2.3" fill="#8ab8ff"/><circle cx="460.3" cy="126.5" r="2.3" fill="#56a64b"/><circle cx="460.3" cy="140.4" r="2.3" fill="#8ab8ff"/><circle cx="466.0" cy="125.7" r="2.3" fill="#56a64b"/><circle cx="466.0" cy="140.7" r="2.3" fill="#8ab8ff"/><circle cx="471.7" cy="125.7" r="2.3" fill="#56a64b"/><circle cx="471.7" cy="140.7" r="2.3" fill="#8ab8ff"/><circle cx="477.5" cy="124.1" r="2.3" fill="#56a64b"/><circle cx="477.5" cy="140.7" r="2.3" fill="#8ab8ff"/><circle cx="483.2" cy="128.0" r="2.3" fill="#56a64b"/><circle cx="483.2" cy="141.6" r="2.3" fill="#8ab8ff"/><circle cx="488.9" cy="124.1" r="2.3" fill="#56a64b"/><circle cx="488.9" cy="141.0" r="2.3" fill="#8ab8ff"/><circle cx="494.7" cy="125.7" r="2.3" fill="#56a64b"/><circle cx="494.7" cy="141.0" r="2.3" fill="#8ab8ff"/><circle cx="500.4" cy="126.5" r="2.3" fill="#56a64b"/><circle cx="500.4" cy="140.4" r="2.3" fill="#8ab8ff"/><circle cx="506.1" cy="125.0" r="2.3" fill="#56a64b"/><circle cx="506.1" cy="140.7" r="2.3" fill="#8ab8ff"/><circle cx="511.9" cy="128.0" r="2.3" fill="#56a64b"/><circle cx="511.9" cy="141.0" r="2.3" fill="#8ab8ff"/><circle cx="517.6" cy="126.5" r="2.3" fill="#56a64b"/><circle cx="517.6" cy="140.7" r="2.3" fill="#8ab8ff"/><circle cx="523.3" cy="128.0" r="2.3" fill="#56a64b"/><circle cx="523.3" cy="141.6" r="2.3" fill="#8ab8ff"/><circle cx="529.1" cy="125.0" r="2.3" fill="#56a64b"/><circle cx="529.1" cy="141.6" r="2.3" fill="#8ab8ff"/><circle cx="534.8" cy="125.0" r="2.3" fill="#56a64b"/><circle cx="534.8" cy="140.7" r="2.3" fill="#8ab8ff"/><circle cx="540.5" cy="126.5" r="2.3" fill="#56a64b"/><circle cx="540.5" cy="141.6" r="2.3" fill="#8ab8ff"/><circle cx="546.3" cy="119.5" r="2.3" fill="#56a64b"/><circle cx="546.3" cy="145.5" r="2.3" fill="#8ab8ff"/><circle cx="552.0" cy="128.0" r="2.3" fill="#56a64b"/><circle cx="552.0" cy="140.7" r="2.3" fill="#8ab8ff"/><circle cx="557.7" cy="128.0" r="2.3" fill="#56a64b"/><circle cx="557.7" cy="140.7" r="2.3" fill="#8ab8ff"/><circle cx="563.5" cy="125.0" r="2.3" fill="#56a64b"/><circle cx="563.5" cy="140.7" r="2.3" fill="#8ab8ff"/><circle cx="569.2" cy="125.0" r="2.3" fill="#56a64b"/><circle cx="569.2" cy="140.7" r="2.3" fill="#8ab8ff"/><circle cx="574.9" cy="121.3" r="2.3" fill="#56a64b"/><circle cx="574.9" cy="143.7" r="2.3" fill="#8ab8ff"/><circle cx="580.7" cy="117.0" r="2.3" fill="#56a64b"/><circle cx="580.7" cy="148.0" r="2.3" fill="#8ab8ff"/><circle cx="586.4" cy="119.5" r="2.3" fill="#56a64b"/><circle cx="586.4" cy="145.5" r="2.3" fill="#8ab8ff"/><circle cx="592.2" cy="126.5" r="2.3" fill="#56a64b"/><circle cx="592.2" cy="140.7" r="2.3" fill="#8ab8ff"/><circle cx="597.9" cy="125.0" r="2.3" fill="#56a64b"/><circle cx="597.9" cy="140.7" r="2.3" fill="#8ab8ff"/><circle cx="603.6" cy="125.0" r="2.3" fill="#56a64b"/><circle cx="603.6" cy="140.7" r="2.3" fill="#8ab8ff"/><circle cx="609.4" cy="128.0" r="2.3" fill="#56a64b"/><circle cx="609.4" cy="140.7" r="2.3" fill="#8ab8ff"/><circle cx="615.1" cy="125.7" r="2.3" fill="#56a64b"/><circle cx="615.1" cy="140.7" r="2.3" fill="#8ab8ff"/><circle cx="620.8" cy="117.9" r="2.3" fill="#56a64b"/><circle cx="620.8" cy="147.1" r="2.3" fill="#8ab8ff"/><circle cx="626.6" cy="113.3" r="2.3" fill="#56a64b"/><circle cx="626.6" cy="151.7" r="2.3" fill="#8ab8ff"/><circle cx="632.3" cy="120.4" r="2.3" fill="#56a64b"/><circle cx="632.3" cy="144.6" r="2.3" fill="#8ab8ff"/><circle cx="638.0" cy="125.7" r="2.3" fill="#56a64b"/><circle cx="638.0" cy="140.7" r="2.3" fill="#8ab8ff"/><circle cx="643.8" cy="125.0" r="2.3" fill="#56a64b"/><circle cx="643.8" cy="140.7" r="2.3" fill="#8ab8ff"/><circle cx="649.5" cy="125.0" r="2.3" fill="#56a64b"/><circle cx="649.5" cy="141.0" r="2.3" fill="#8ab8ff"/><circle cx="655.2" cy="125.0" r="2.3" fill="#56a64b"/><circle cx="655.2" cy="140.4" r="2.3" fill="#8ab8ff"/><circle cx="661.0" cy="122.0" r="2.3" fill="#56a64b"/><circle cx="661.0" cy="143.0" r="2.3" fill="#8ab8ff"/><circle cx="666.7" cy="110.8" r="2.3" fill="#56a64b"/><circle cx="666.7" cy="154.2" r="2.3" fill="#8ab8ff"/><circle cx="672.4" cy="125.7" r="2.3" fill="#56a64b"/><circle cx="672.4" cy="140.7" r="2.3" fill="#8ab8ff"/><circle cx="678.2" cy="122.9" r="2.3" fill="#56a64b"/><circle cx="678.2" cy="142.1" r="2.3" fill="#8ab8ff"/><circle cx="683.9" cy="125.0" r="2.3" fill="#56a64b"/><circle cx="683.9" cy="141.0" r="2.3" fill="#8ab8ff"/><circle cx="689.6" cy="125.0" r="2.3" fill="#56a64b"/><circle cx="689.6" cy="140.7" r="2.3" fill="#8ab8ff"/><circle cx="695.4" cy="128.0" r="2.3" fill="#56a64b"/><circle cx="695.4" cy="141.6" r="2.3" fill="#8ab8ff"/><circle cx="701.1" cy="125.7" r="2.3" fill="#56a64b"/><circle cx="701.1" cy="141.6" r="2.3" fill="#8ab8ff"/><circle cx="706.9" cy="125.0" r="2.3" fill="#56a64b"/><circle cx="706.9" cy="141.6" r="2.3" fill="#8ab8ff"/><circle cx="712.6" cy="126.5" r="2.3" fill="#56a64b"/><circle cx="712.6" cy="141.0" r="2.3" fill="#8ab8ff"/><circle cx="718.3" cy="125.7" r="2.3" fill="#56a64b"/><circle cx="718.3" cy="140.4" r="2.3" fill="#8ab8ff"/><circle cx="724.1" cy="122.9" r="2.3" fill="#56a64b"/><circle cx="724.1" cy="142.1" r="2.3" fill="#8ab8ff"/><circle cx="729.8" cy="125.0" r="2.3" fill="#56a64b"/><circle cx="729.8" cy="140.7" r="2.3" fill="#8ab8ff"/><circle cx="735.5" cy="125.0" r="2.3" fill="#56a64b"/><circle cx="735.5" cy="140.7" r="2.3" fill="#8ab8ff"/><circle cx="741.3" cy="99.4" r="2.3" fill="#56a64b"/><circle cx="741.3" cy="165.6" r="2.3" fill="#8ab8ff"/><circle cx="747.0" cy="125.7" r="2.3" fill="#56a64b"/><circle cx="747.0" cy="140.7" r="2.3" fill="#8ab8ff"/><circle cx="752.7" cy="125.0" r="2.3" fill="#56a64b"/><circle cx="752.7" cy="140.7" r="2.3" fill="#8ab8ff"/><circle cx="758.5" cy="128.0" r="2.3" fill="#56a64b"/><circle cx="758.5" cy="140.4" r="2.3" fill="#8ab8ff"/><circle cx="764.2" cy="125.0" r="2.3" fill="#56a64b"/><circle cx="764.2" cy="140.7" r="2.3" fill="#8ab8ff"/><circle cx="769.9" cy="128.0" r="2.3" fill="#56a64b"/><circle cx="769.9" cy="141.0" r="2.3" fill="#8ab8ff"/><circle cx="775.7" cy="125.7" r="2.3" fill="#56a64b"/><circle cx="775.7" cy="140.7" r="2.3" fill="#8ab8ff"/><circle cx="781.4" cy="124.1" r="2.3" fill="#56a64b"/><circle cx="781.4" cy="140.7" r="2.3" fill="#8ab8ff"/><circle cx="787.1" cy="125.7" r="2.3" fill="#56a64b"/><circle cx="787.1" cy="140.7" r="2.3" fill="#8ab8ff"/><circle cx="792.9" cy="122.9" r="2.3" fill="#56a64b"/><circle cx="792.9" cy="142.1" r="2.3" fill="#8ab8ff"/><circle cx="798.6" cy="122.9" r="2.3" fill="#56a64b"/><circle cx="798.6" cy="142.1" r="2.3" fill="#8ab8ff"/><circle cx="804.4" cy="125.0" r="2.3" fill="#56a64b"/><circle cx="804.4" cy="140.4" r="2.3" fill="#8ab8ff"/><circle cx="810.1" cy="125.0" r="2.3" fill="#56a64b"/><circle cx="810.1" cy="140.7" r="2.3" fill="#8ab8ff"/><circle cx="815.8" cy="128.0" r="2.3" fill="#56a64b"/><circle cx="815.8" cy="140.7" r="2.3" fill="#8ab8ff"/><circle cx="821.6" cy="128.0" r="2.3" fill="#56a64b"/><circle cx="821.6" cy="140.7" r="2.3" fill="#8ab8ff"/><circle cx="827.3" cy="125.0" r="2.3" fill="#56a64b"/><circle cx="827.3" cy="141.6" r="2.3" fill="#8ab8ff"/><circle cx="833.0" cy="113.3" r="2.3" fill="#56a64b"/><circle cx="833.0" cy="151.7" r="2.3" fill="#8ab8ff"/><circle cx="838.8" cy="117.0" r="2.3" fill="#56a64b"/><circle cx="838.8" cy="148.0" r="2.3" fill="#8ab8ff"/><circle cx="844.5" cy="127.2" r="2.3" fill="#56a64b"/><circle cx="844.5" cy="140.7" r="2.3" fill="#8ab8ff"/><circle cx="850.2" cy="128.0" r="2.3" fill="#56a64b"/><circle cx="850.2" cy="140.7" r="2.3" fill="#8ab8ff"/><circle cx="856.0" cy="127.2" r="2.3" fill="#56a64b"/><circle cx="856.0" cy="140.7" r="2.3" fill="#8ab8ff"/><circle cx="861.7" cy="126.5" r="2.3" fill="#56a64b"/><circle cx="861.7" cy="140.7" r="2.3" fill="#8ab8ff"/><circle cx="867.4" cy="125.0" r="2.3" fill="#56a64b"/><circle cx="867.4" cy="141.0" r="2.3" fill="#8ab8ff"/><circle cx="873.2" cy="128.0" r="2.3" fill="#56a64b"/><circle cx="873.2" cy="140.7" r="2.3" fill="#8ab8ff"/><circle cx="878.9" cy="120.4" r="2.3" fill="#56a64b"/><circle cx="878.9" cy="144.6" r="2.3" fill="#8ab8ff"/></svg></div>
<div class="panel" style="left:935px;top:408px;width:910px;height:258px"><div class="ptitle">L3/L4 Protocols</div><svg width="908" height="256"><rect x="109" y="45" width="1" height="176" fill="#ffffff" fill-opacity="0.165"/><rect x="178" y="45" width="1" height="176" fill="#ffffff" fill-opacity="0.165"/><rect x="247" y="45" width="1" height="176" fill="#ffffff" fill-opacity="0.165"/><rect x="316" y="45" width="1" height="176" fill="#ffffff" fill-opacity="0.165"/><rect x="385" y="45" width="1" height="176" fill="#ffffff" fill-opacity="0.165"/><rect x="454" y="45" width="1" height="176" fill="#ffffff" fill-opacity="0.165"/><rect x="523" y="45" width="1" height="176" fill="#ffffff" fill-opacity="0.165"/><rect x="592" y="45" width="1" height="176" fill="#ffffff" fill-opacity="0.165"/><rect x="660" y="45" width="1" height="176" fill="#ffffff" fill-opacity="0.165"/><rect x="729" y="45" width="1" height="176" fill="#ffffff" fill-opacity="0.165"/><rect x="798" y="45" width="1" height="176" fill="#ffffff" fill-opacity="0.165"/><rect x="867" y="45" width="1" height="176" fill="#ffffff" fill-opacity="0.165"/><rect x="57" y="45" width="827" height="1" fill="#ffffff" fill-opacity="0.165"/><rect x="57" y="88" width="827" height="1" fill="#ffffff" fill-opacity="0.165"/><rect x="57" y="132" width="827" height="1" fill="#ffffff" fill-opacity="0.165"/><rect x="57" y="176" width="827" height="1" fill="#ffffff" fill-opacity="0.165"/><rect x="57" y="220" width="827" height="1" fill="#ffffff" fill-opacity="0.165"/><text class="ax" x="110.2" y="237" text-anchor="middle">18:00</text><text class="ax" x="179.1" y="237" text-anchor="middle">20:00</text><text class="ax" x="248.0" y="237" text-anchor="middle">22:00</text><text class="ax" x="316.9" y="237" text-anchor="middle">00:00</text><text class="ax" x="385.8" y="237" text-anchor="middle">02:00</text><text class="ax" x="454.7" y="237" text-anchor="middle">04:00</text><text class="ax" x="523.6" y="237" text-anchor="middle">06:00</text><text class="ax" x="592.5" y="237" text-anchor="middle">08:00</text><text class="ax" x="661.4" y="237" text-anchor="middle">10:00</text><text class="ax" x="730.3" y="237" text-anchor="middle">12:00</text><text class="ax" x="799.2" y="237" text-anchor="middle">14:00</text><text class="ax" x="868.1" y="237" text-anchor="middle">16:00</text><text class="ax" x="52" y="49.3" text-anchor="end">10 p/s</text><text class="ax" x="52" y="92.3" text-anchor="end">7.50 p/s</text><text class="ax" x="52" y="136.3" text-anchor="end">5 p/s</text><text class="ax" x="52" y="180.3" text-anchor="end">2.50 p/s</text><text class="ax" x="52" y="224.3" text-anchor="end">0 p/s</text><polygon points="57.3,220 57.3,170.6 63.0,153.3 68.8,185.2 74.5,135.2 80.3,175.1 86.0,178.7 91.8,173.0 97.5,181.2 103.3,181.9 109.0,154.6 114.8,148.9 120.5,150.3 126.3,171.9 132.0,185.8 137.8,191.5 143.5,180.6 149.3,194.3 155.0,190.0 160.8,174.4 166.5,187.2 172.3,182.4 178.0,63.4 183.8,190.4 189.5,179.0 195.3,181.0 201.0,183.5 206.8,164.5 212.5,158.1 218.3,160.1 224.0,185.8 229.8,190.8 235.5,193.8 241.3,184.1 247.0,174.1 252.8,183.3 258.5,193.8 264.3,201.1 270.0,169.8 275.8,190.5 281.5,200.7 287.3,191.6 293.0,190.7 298.8,202.7 304.5,202.0 310.3,199.8 316.0,193.9 321.8,200.1 327.5,186.9 333.3,203.3 339.0,188.3 344.7,181.8 350.5,195.4 356.2,194.0 362.0,196.5 367.7,188.9 373.5,163.2 379.2,197.4 385.0,199.8 390.7,191.1 396.5,195.9 402.2,202.1 408.0,182.1 413.7,198.1 419.5,198.8 425.2,199.3 431.0,182.7 436.7,199.8 442.5,199.0 448.2,195.7 454.0,195.5 459.7,199.7 465.5,196.6 471.2,179.6 477.0,191.9 482.7,198.8 488.5,189.4 494.2,200.9 500.0,195.6 505.7,200.2 511.5,195.2 517.2,198.1 523.0,199.5 528.7,201.2 534.5,197.0 540.2,199.5 546.0,187.0 551.7,200.0 557.5,202.4 563.2,199.9 569.0,162.6 574.7,197.5 580.5,172.0 586.2,189.7 592.0,196.2 597.7,199.5 603.5,197.6 609.2,200.3 615.0,198.8 620.7,145.9 626.5,185.3 632.2,196.0 637.9,198.1 643.7,194.9 649.4,187.5 655.2,198.2 660.9,161.2 666.7,144.7 672.4,195.2 678.2,164.5 683.9,186.7 689.7,188.4 695.4,193.2 701.2,197.8 706.9,193.3 712.7,195.4 718.4,188.8 724.2,185.6 729.9,192.5 735.7,197.0 741.4,147.5 747.2,195.7 752.9,196.7 758.7,198.0 764.4,200.6 770.2,198.2 775.9,188.7 781.7,195.5 787.4,194.0 793.2,190.8 798.9,187.9 804.7,198.9 810.4,196.5 816.2,193.2 821.9,198.6 827.7,195.6 833.4,190.2 839.2,174.9 844.9,188.6 850.7,201.1 856.4,195.9 862.2,191.2 867.9,197.2 873.7,196.6 879.4,171.1 879.4,220" fill="#73bf69" fill-opacity="0.12"/><polygon points="57.3,220 57.3,185.7 63.0,169.2 68.8,201.8 74.5,154.6 80.3,189.6 86.0,194.1 91.8,188.0 97.5,196.4 103.3,196.4 109.0,176.6 114.8,164.0 120.5,165.8 126.3,187.3 132.0,201.8 137.8,206.3 143.5,200.9 149.3,209.0 155.0,205.5 160.8,188.5 166.5,201.8 172.3,197.2 178.0,80.0 183.8,205.5 189.5,196.4 195.3,196.4 201.0,199.5 206.8,179.8 212.5,174.5 218.3,175.9 224.0,200.9 229.8,206.3 235.5,208.6 241.3,199.5 247.0,190.1 252.8,199.5 258.5,208.6 264.3,217.0 270.0,185.7 275.8,206.3 281.5,216.2 287.3,207.1 293.0,205.5 298.8,217.0 304.5,217.0 310.3,215.4 316.0,209.0 321.8,214.8 327.5,201.8 333.3,218.9 339.0,204.1 344.7,197.2 350.5,210.0 356.2,209.3 362.0,211.6 367.7,204.1 373.5,181.0 379.2,213.2 385.0,214.8 390.7,207.1 396.5,212.5 402.2,217.7 408.0,197.6 413.7,213.9 419.5,213.9 425.2,214.8 431.0,197.6 436.7,215.4 442.5,213.9 448.2,210.9 454.0,210.0 459.7,214.8 465.5,211.6 471.2,194.6 477.0,207.1 482.7,213.9 488.5,204.4 494.2,215.4 500.0,210.4 505.7,215.4 511.5,211.2 517.2,213.2 523.0,215.4 528.7,217.0 534.5,212.5 540.2,215.4 546.0,201.8 551.7,214.8 557.5,218.4 563.2,214.8 569.0,178.5 574.7,212.8 580.5,186.1 586.2,205.5 592.0,212.5 597.7,214.8 603.5,213.2 609.2,216.0 615.0,213.9 620.7,161.4 626.5,200.2 632.2,211.6 637.9,213.9 643.7,210.9 649.4,203.2 655.2,213.9 660.9,176.6 666.7,160.7 672.4,210.0 678.2,178.9 683.9,201.3 689.7,204.1 695.4,207.8 701.2,213.9 706.9,208.6 712.7,210.9 718.4,204.8 724.2,201.8 729.9,207.8 735.7,211.2 741.4,163.7 747.2,211.2 752.9,211.6 758.7,213.9 764.4,216.2 770.2,213.2 775.9,204.4 781.7,210.9 787.4,208.6 793.2,205.5 798.9,203.2 804.7,213.9 810.4,212.5 816.2,209.8 821.9,213.5 827.7,210.9 833.4,205.5 839.2,190.6 844.9,204.1 850.7,216.5 856.4,211.6 862.2,206.3 867.9,211.6 873.7,211.6 879.4,187.3 879.4,220" fill="#ff9830" fill-opacity="0.12"/><polygon points="57.3,220 57.3,206.1 63.0,205.7 68.8,205.1 74.5,201.8 80.3,206.5 86.0,205.8 91.8,206.3 97.5,206.5 103.3,206.4 109.0,199.5 114.8,206.3 120.5,206.2 126.3,206.2 132.0,205.4 137.8,206.2 143.5,200.8 149.3,206.4 155.0,206.1 160.8,206.7 166.5,206.3 172.3,206.7 178.0,203.4 183.8,205.7 189.5,203.4 195.3,205.9 201.0,205.1 206.8,206.5 212.5,205.3 218.3,205.9 224.0,205.8 229.8,205.2 235.5,206.0 241.3,205.8 247.0,205.5 252.8,205.0 258.5,206.1 264.3,205.2 270.0,205.5 275.8,205.6 281.5,206.0 287.3,206.1 293.0,206.6 298.8,206.5 304.5,206.6 310.3,205.4 316.0,206.3 321.8,206.4 327.5,206.6 333.3,205.2 339.0,205.2 344.7,205.5 350.5,206.2 356.2,206.3 362.0,206.2 367.7,205.9 373.5,203.4 379.2,205.9 385.0,206.2 390.7,205.0 396.5,205.0 402.2,205.7 408.0,206.3 413.7,205.0 419.5,206.2 425.2,206.1 431.0,206.7 436.7,206.0 442.5,205.9 448.2,205.8 454.0,206.3 459.7,205.8 465.5,206.7 471.2,206.2 477.0,206.5 482.7,206.0 488.5,206.6 494.2,206.7 500.0,206.2 505.7,206.3 511.5,205.7 517.2,205.8 523.0,205.4 528.7,205.5 534.5,205.4 540.2,205.2 546.0,206.0 551.7,206.1 557.5,205.0 563.2,206.4 569.0,205.4 574.7,205.6 580.5,206.6 586.2,205.2 592.0,205.1 597.7,205.6 603.5,205.4 609.2,205.3 615.0,206.5 620.7,205.8 626.5,205.8 632.2,205.2 637.9,205.3 643.7,205.3 649.4,205.7 655.2,205.1 660.9,205.5 666.7,205.5 672.4,206.3 678.2,206.6 683.9,206.5 689.7,206.1 695.4,206.5 701.2,205.2 706.9,205.7 712.7,205.6 718.4,205.6 724.2,205.5 729.9,205.8 735.7,206.7 741.4,205.3 747.2,205.4 752.9,205.8 758.7,205.8 764.4,205.5 770.2,206.6 775.9,205.4 781.7,206.3 787.4,206.6 793.2,206.2 798.9,205.4 804.7,206.3 810.4,205.4 816.2,205.0 821.9,205.8 827.7,206.0 833.4,205.9 839.2,205.5 844.9,205.4 850.7,205.6 856.4,205.6 862.2,206.6 867.9,206.4 873.7,206.3 879.4,205.4 879.4,220" fill="#5ec4da" fill-opacity="0.12"/><polygon points="57.3,220 57.3,216.0 63.0,215.5 68.8,216.6 74.5,216.5 80.3,216.1 86.0,215.3 91.8,213.3 97.5,213.3 103.3,216.1 109.0,215.6 114.8,215.7 120.5,215.7 126.3,216.4 132.0,214.8 137.8,216.3 143.5,214.6 149.3,214.7 155.0,216.6 160.8,215.7 166.5,215.0 172.3,214.6 178.0,215.7 183.8,216.1 189.5,216.2 195.3,214.7 201.0,216.2 206.8,215.5 212.5,216.4 218.3,215.6 224.0,214.7 229.8,216.4 235.5,215.0 241.3,215.6 247.0,214.8 252.8,215.2 258.5,216.2 264.3,213.3 270.0,215.7 275.8,216.6 281.5,216.7 287.3,215.6 293.0,215.7 298.8,216.0 304.5,216.4 310.3,216.0 316.0,216.0 321.8,214.9 327.5,216.7 333.3,215.1 339.0,214.9 344.7,216.4 350.5,214.7 356.2,215.2 362.0,214.8 367.7,216.1 373.5,213.3 379.2,215.8 385.0,214.6 390.7,215.4 396.5,215.9 402.2,215.8 408.0,216.1 413.7,216.6 419.5,216.5 425.2,214.9 431.0,216.1 436.7,214.7 442.5,216.2 448.2,216.1 454.0,215.6 459.7,216.3 465.5,215.9 471.2,214.7 477.0,214.8 482.7,215.0 488.5,215.4 494.2,214.8 500.0,214.7 505.7,215.5 511.5,215.2 517.2,216.6 523.0,215.1 528.7,215.7 534.5,215.1 540.2,215.3 546.0,216.1 551.7,216.6 557.5,214.7 563.2,216.4 569.0,215.7 574.7,216.0 580.5,216.0 586.2,215.1 592.0,214.6 597.7,216.1 603.5,215.3 609.2,216.0 615.0,215.5 620.7,215.8 626.5,216.3 632.2,216.3 637.9,216.2 643.7,214.8 649.4,215.6 655.2,216.2 660.9,214.8 666.7,214.6 672.4,215.7 678.2,213.3 683.9,216.3 689.7,216.5 695.4,216.0 701.2,216.5 706.9,216.2 712.7,216.1 718.4,215.5 724.2,214.8 729.9,215.1 735.7,215.8 741.4,215.8 747.2,215.6 752.9,215.9 758.7,216.0 764.4,216.5 770.2,216.1 775.9,214.6 781.7,216.4 787.4,215.6 793.2,215.4 798.9,214.9 804.7,216.2 810.4,216.1 816.2,216.2 821.9,215.8 827.7,215.7 833.4,214.7 839.2,214.9 844.9,214.8 850.7,216.6 856.4,216.6 862.2,215.2 867.9,214.8 873.7,215.7 879.4,215.4 879.4,220" fill="#f2495c" fill-opacity="0.12"/><polygon points="57.3,220 57.3,219.6 63.0,219.4 68.8,219.2 74.5,219.2 80.3,219.2 86.0,219.1 91.8,219.5 97.5,219.6 103.3,219.6 109.0,219.4 114.8,219.3 120.5,219.2 126.3,219.3 132.0,219.3 137.8,219.2 143.5,219.4 149.3,219.4 155.0,219.6 160.8,219.2 166.5,219.5 172.3,219.2 178.0,219.3 183.8,219.5 189.5,219.6 195.3,219.5 201.0,219.3 206.8,219.3 212.5,219.6 218.3,219.6 224.0,219.4 229.8,219.3 235.5,219.4 241.3,219.5 247.0,219.3 252.8,219.6 258.5,219.5 264.3,219.4 270.0,219.1 275.8,219.3 281.5,219.2 287.3,219.4 293.0,219.5 298.8,219.5 304.5,219.1 310.3,219.3 316.0,219.5 321.8,219.6 327.5,219.4 333.3,219.3 339.0,219.4 344.7,219.5 350.5,219.3 356.2,219.2 362.0,219.5 367.7,219.6 373.5,219.5 379.2,219.4 385.0,219.3 390.7,219.5 396.5,219.2 402.2,219.3 408.0,219.4 413.7,219.5 419.5,219.1 425.2,219.5 431.0,219.2 436.7,219.5 442.5,219.5 448.2,219.3 454.0,219.5 459.7,219.2 465.5,219.4 471.2,219.6 477.0,219.5 482.7,219.4 488.5,219.3 494.2,219.2 500.0,219.6 505.7,219.4 511.5,219.5 517.2,219.1 523.0,219.6 528.7,219.6 534.5,219.6 540.2,219.4 546.0,219.2 551.7,219.2 557.5,219.3 563.2,219.1 569.0,219.2 574.7,219.5 580.5,219.6 586.2,219.2 592.0,219.3 597.7,219.6 603.5,219.3 609.2,219.5 615.0,219.5 620.7,219.5 626.5,219.6 632.2,219.6 637.9,219.5 643.7,219.5 649.4,219.1 655.2,219.6 660.9,219.1 666.7,219.5 672.4,219.5 678.2,219.2 683.9,219.2 689.7,219.4 695.4,219.6 701.2,219.4 706.9,219.5 712.7,219.2 718.4,219.5 724.2,219.5 729.9,219.2 735.7,219.6 741.4,219.4 747.2,219.2 752.9,219.2 758.7,219.6 764.4,219.6 770.2,219.6 775.9,219.2 781.7,219.5 787.4,219.3 793.2,219.2 798.9,219.5 804.7,219.5 810.4,219.1 816.2,219.3 821.9,219.5 827.7,219.3 833.4,219.5 839.2,219.5 844.9,219.6 850.7,219.3 856.4,219.2 862.2,219.3 867.9,219.2 873.7,219.6 879.4,219.5 879.4,220" fill="#e0b400" fill-opacity="0.12"/><polyline points="57.3,170.6 63.0,153.3 68.8,185.2 74.5,135.2 80.3,175.1 86.0,178.7 91.8,173.0 97.5,181.2 103.3,181.9 109.0,154.6 114.8,148.9 120.5,150.3 126.3,171.9 132.0,185.8 137.8,191.5 143.5,180.6 149.3,194.3 155.0,190.0 160.8,174.4 166.5,187.2 172.3,182.4 178.0,63.4 183.8,190.4 189.5,179.0 195.3,181.0 201.0,183.5 206.8,164.5 212.5,158.1 218.3,160.1 224.0,185.8 229.8,190.8 235.5,193.8 241.3,184.1 247.0,174.1 252.8,183.3 258.5,193.8 264.3,201.1 270.0,169.8 275.8,190.5 281.5,200.7 287.3,191.6 293.0,190.7 298.8,202.7 304.5,202.0 310.3,199.8 316.0,193.9 321.8,200.1 327.5,186.9 333.3,203.3 339.0,188.3 344.7,181.8 350.5,195.4 356.2,194.0 362.0,196.5 367.7,188.9 373.5,163.2 379.2,197.4 385.0,199.8 390.7,191.1 396.5,195.9 402.2,202.1 408.0,182.1 413.7,198.1 419.5,198.8 425.2,199.3 431.0,182.7 436.7,199.8 442.5,199.0 448.2,195.7 454.0,195.5 459.7,199.7 465.5,196.6 471.2,179.6 477.0,191.9 482.7,198.8 488.5,189.4 494.2,200.9 500.0,195.6 505.7,200.2 511.5,195.2 517.2,198.1 523.0,199.5 528.7,201.2 534.5,197.0 540.2,199.5 546.0,187.0 551.7,200.0 557.5,202.4 563.2,199.9 569.0,162.6 574.7,197.5 580.5,172.0 586.2,189.7 592.0,196.2 597.7,199.5 603.5,197.6 609.2,200.3 615.0,198.8 620.7,145.9 626.5,185.3 632.2,196.0 637.9,198.1 643.7,194.9 649.4,187.5 655.2,198.2 660.9,161.2 666.7,144.7 672.4,195.2 678.2,164.5 683.9,186.7 689.7,188.4 695.4,193.2 701.2,197.8 706.9,193.3 712.7,195.4 718.4,188.8 724.2,185.6 729.9,192.5 735.7,197.0 741.4,147.5 747.2,195.7 752.9,196.7 758.7,198.0 764.4,200.6 770.2,198.2 775.9,188.7 781.7,195.5 787.4,194.0 793.2,190.8 798.9,187.9 804.7,198.9 810.4,196.5 816.2,193.2 821.9,198.6 827.7,195.6 833.4,190.2 839.2,174.9 844.9,188.6 850.7,201.1 856.4,195.9 862.2,191.2 867.9,197.2 873.7,196.6 879.4,171.1" fill="none" stroke="#73bf69" stroke-width="1.1" stroke-opacity="1" stroke-linejoin="round"/><polyline points="57.3,206.1 63.0,205.7 68.8,205.1 74.5,201.8 80.3,206.5 86.0,205.8 91.8,206.3 97.5,206.5 103.3,206.4 109.0,199.5 114.8,206.3 120.5,206.2 126.3,206.2 132.0,205.4 137.8,206.2 143.5,200.8 149.3,206.4 155.0,206.1 160.8,206.7 166.5,206.3 172.3,206.7 178.0,203.4 183.8,205.7 189.5,203.4 195.3,205.9 201.0,205.1 206.8,206.5 212.5,205.3 218.3,205.9 224.0,205.8 229.8,205.2 235.5,206.0 241.3,205.8 247.0,205.5 252.8,205.0 258.5,206.1 264.3,205.2 270.0,205.5 275.8,205.6 281.5,206.0 287.3,206.1 293.0,206.6 298.8,206.5 304.5,206.6 310.3,205.4 316.0,206.3 321.8,206.4 327.5,206.6 333.3,205.2 339.0,205.2 344.7,205.5 350.5,206.2 356.2,206.3 362.0,206.2 367.7,205.9 373.5,203.4 379.2,205.9 385.0,206.2 390.7,205.0 396.5,205.0 402.2,205.7 408.0,206.3 413.7,205.0 419.5,206.2 425.2,206.1 431.0,206.7 436.7,206.0 442.5,205.9 448.2,205.8 454.0,206.3 459.7,205.8 465.5,206.7 471.2,206.2 477.0,206.5 482.7,206.0 488.5,206.6 494.2,206.7 500.0,206.2 505.7,206.3 511.5,205.7 517.2,205.8 523.0,205.4 528.7,205.5 534.5,205.4 540.2,205.2 546.0,206.0 551.7,206.1 557.5,205.0 563.2,206.4 569.0,205.4 574.7,205.6 580.5,206.6 586.2,205.2 592.0,205.1 597.7,205.6 603.5,205.4 609.2,205.3 615.0,206.5 620.7,205.8 626.5,205.8 632.2,205.2 637.9,205.3 643.7,205.3 649.4,205.7 655.2,205.1 660.9,205.5 666.7,205.5 672.4,206.3 678.2,206.6 683.9,206.5 689.7,206.1 695.4,206.5 701.2,205.2 706.9,205.7 712.7,205.6 718.4,205.6 724.2,205.5 729.9,205.8 735.7,206.7 741.4,205.3 747.2,205.4 752.9,205.8 758.7,205.8 764.4,205.5 770.2,206.6 775.9,205.4 781.7,206.3 787.4,206.6 793.2,206.2 798.9,205.4 804.7,206.3 810.4,205.4 816.2,205.0 821.9,205.8 827.7,206.0 833.4,205.9 839.2,205.5 844.9,205.4 850.7,205.6 856.4,205.6 862.2,206.6 867.9,206.4 873.7,206.3 879.4,205.4" fill="none" stroke="#5ec4da" stroke-width="1.1" stroke-opacity="1" stroke-linejoin="round"/><polyline points="57.3,185.7 63.0,169.2 68.8,201.8 74.5,154.6 80.3,189.6 86.0,194.1 91.8,188.0 97.5,196.4 103.3,196.4 109.0,176.6 114.8,164.0 120.5,165.8 126.3,187.3 132.0,201.8 137.8,206.3 143.5,200.9 149.3,209.0 155.0,205.5 160.8,188.5 166.5,201.8 172.3,197.2 178.0,80.0 183.8,205.5 189.5,196.4 195.3,196.4 201.0,199.5 206.8,179.8 212.5,174.5 218.3,175.9 224.0,200.9 229.8,206.3 235.5,208.6 241.3,199.5 247.0,190.1 252.8,199.5 258.5,208.6 264.3,217.0 270.0,185.7 275.8,206.3 281.5,216.2 287.3,207.1 293.0,205.5 298.8,217.0 304.5,217.0 310.3,215.4 316.0,209.0 321.8,214.8 327.5,201.8 333.3,218.9 339.0,204.1 344.7,197.2 350.5,210.0 356.2,209.3 362.0,211.6 367.7,204.1 373.5,181.0 379.2,213.2 385.0,214.8 390.7,207.1 396.5,212.5 402.2,217.7 408.0,197.6 413.7,213.9 419.5,213.9 425.2,214.8 431.0,197.6 436.7,215.4 442.5,213.9 448.2,210.9 454.0,210.0 459.7,214.8 465.5,211.6 471.2,194.6 477.0,207.1 482.7,213.9 488.5,204.4 494.2,215.4 500.0,210.4 505.7,215.4 511.5,211.2 517.2,213.2 523.0,215.4 528.7,217.0 534.5,212.5 540.2,215.4 546.0,201.8 551.7,214.8 557.5,218.4 563.2,214.8 569.0,178.5 574.7,212.8 580.5,186.1 586.2,205.5 592.0,212.5 597.7,214.8 603.5,213.2 609.2,216.0 615.0,213.9 620.7,161.4 626.5,200.2 632.2,211.6 637.9,213.9 643.7,210.9 649.4,203.2 655.2,213.9 660.9,176.6 666.7,160.7 672.4,210.0 678.2,178.9 683.9,201.3 689.7,204.1 695.4,207.8 701.2,213.9 706.9,208.6 712.7,210.9 718.4,204.8 724.2,201.8 729.9,207.8 735.7,211.2 741.4,163.7 747.2,211.2 752.9,211.6 758.7,213.9 764.4,216.2 770.2,213.2 775.9,204.4 781.7,210.9 787.4,208.6 793.2,205.5 798.9,203.2 804.7,213.9 810.4,212.5 816.2,209.8 821.9,213.5 827.7,210.9 833.4,205.5 839.2,190.6 844.9,204.1 850.7,216.5 856.4,211.6 862.2,206.3 867.9,211.6 873.7,211.6 879.4,187.3" fill="none" stroke="#ff9830" stroke-width="1.1" stroke-opacity="1" stroke-linejoin="round"/><polyline points="57.3,216.0 63.0,215.5 68.8,216.6 74.5,216.5 80.3,216.1 86.0,215.3 91.8,213.3 97.5,213.3 103.3,216.1 109.0,215.6 114.8,215.7 120.5,215.7 126.3,216.4 132.0,214.8 137.8,216.3 143.5,214.6 149.3,214.7 155.0,216.6 160.8,215.7 166.5,215.0 172.3,214.6 178.0,215.7 183.8,216.1 189.5,216.2 195.3,214.7 201.0,216.2 206.8,215.5 212.5,216.4 218.3,215.6 224.0,214.7 229.8,216.4 235.5,215.0 241.3,215.6 247.0,214.8 252.8,215.2 258.5,216.2 264.3,213.3 270.0,215.7 275.8,216.6 281.5,216.7 287.3,215.6 293.0,215.7 298.8,216.0 304.5,216.4 310.3,216.0 316.0,216.0 321.8,214.9 327.5,216.7 333.3,215.1 339.0,214.9 344.7,216.4 350.5,214.7 356.2,215.2 362.0,214.8 367.7,216.1 373.5,213.3 379.2,215.8 385.0,214.6 390.7,215.4 396.5,215.9 402.2,215.8 408.0,216.1 413.7,216.6 419.5,216.5 425.2,214.9 431.0,216.1 436.7,214.7 442.5,216.2 448.2,216.1 454.0,215.6 459.7,216.3 465.5,215.9 471.2,214.7 477.0,214.8 482.7,215.0 488.5,215.4 494.2,214.8 500.0,214.7 505.7,215.5 511.5,215.2 517.2,216.6 523.0,215.1 528.7,215.7 534.5,215.1 540.2,215.3 546.0,216.1 551.7,216.6 557.5,214.7 563.2,216.4 569.0,215.7 574.7,216.0 580.5,216.0 586.2,215.1 592.0,214.6 597.7,216.1 603.5,215.3 609.2,216.0 615.0,215.5 620.7,215.8 626.5,216.3 632.2,216.3 637.9,216.2 643.7,214.8 649.4,215.6 655.2,216.2 660.9,214.8 666.7,214.6 672.4,215.7 678.2,213.3 683.9,216.3 689.7,216.5 695.4,216.0 701.2,216.5 706.9,216.2 712.7,216.1 718.4,215.5 724.2,214.8 729.9,215.1 735.7,215.8 741.4,215.8 747.2,215.6 752.9,215.9 758.7,216.0 764.4,216.5 770.2,216.1 775.9,214.6 781.7,216.4 787.4,215.6 793.2,215.4 798.9,214.9 804.7,216.2 810.4,216.1 816.2,216.2 821.9,215.8 827.7,215.7 833.4,214.7 839.2,214.9 844.9,214.8 850.7,216.6 856.4,216.6 862.2,215.2 867.9,214.8 873.7,215.7 879.4,215.4" fill="none" stroke="#e8484f" stroke-width="1.1" stroke-opacity="1" stroke-linejoin="round"/><polyline points="57.3,219.6 63.0,219.4 68.8,219.2 74.5,219.2 80.3,219.2 86.0,219.1 91.8,219.5 97.5,219.6 103.3,219.6 109.0,219.4 114.8,219.3 120.5,219.2 126.3,219.3 132.0,219.3 137.8,219.2 143.5,219.4 149.3,219.4 155.0,219.6 160.8,219.2 166.5,219.5 172.3,219.2 178.0,219.3 183.8,219.5 189.5,219.6 195.3,219.5 201.0,219.3 206.8,219.3 212.5,219.6 218.3,219.6 224.0,219.4 229.8,219.3 235.5,219.4 241.3,219.5 247.0,219.3 252.8,219.6 258.5,219.5 264.3,219.4 270.0,219.1 275.8,219.3 281.5,219.2 287.3,219.4 293.0,219.5 298.8,219.5 304.5,219.1 310.3,219.3 316.0,219.5 321.8,219.6 327.5,219.4 333.3,219.3 339.0,219.4 344.7,219.5 350.5,219.3 356.2,219.2 362.0,219.5 367.7,219.6 373.5,219.5 379.2,219.4 385.0,219.3 390.7,219.5 396.5,219.2 402.2,219.3 408.0,219.4 413.7,219.5 419.5,219.1 425.2,219.5 431.0,219.2 436.7,219.5 442.5,219.5 448.2,219.3 454.0,219.5 459.7,219.2 465.5,219.4 471.2,219.6 477.0,219.5 482.7,219.4 488.5,219.3 494.2,219.2 500.0,219.6 505.7,219.4 511.5,219.5 517.2,219.1 523.0,219.6 528.7,219.6 534.5,219.6 540.2,219.4 546.0,219.2 551.7,219.2 557.5,219.3 563.2,219.1 569.0,219.2 574.7,219.5 580.5,219.6 586.2,219.2 592.0,219.3 597.7,219.6 603.5,219.3 609.2,219.5 615.0,219.5 620.7,219.5 626.5,219.6 632.2,219.6 637.9,219.5 643.7,219.5 649.4,219.1 655.2,219.6 660.9,219.1 666.7,219.5 672.4,219.5 678.2,219.2 683.9,219.2 689.7,219.4 695.4,219.6 701.2,219.4 706.9,219.5 712.7,219.2 718.4,219.5 724.2,219.5 729.9,219.2 735.7,219.6 741.4,219.4 747.2,219.2 752.9,219.2 758.7,219.6 764.4,219.6 770.2,219.6 775.9,219.2 781.7,219.5 787.4,219.3 793.2,219.2 798.9,219.5 804.7,219.5 810.4,219.1 816.2,219.3 821.9,219.5 827.7,219.3 833.4,219.5 839.2,219.5 844.9,219.6 850.7,219.3 856.4,219.2 862.2,219.3 867.9,219.2 873.7,219.6 879.4,219.5" fill="none" stroke="#e0b400" stroke-width="1.1" stroke-opacity="1" stroke-linejoin="round"/></svg></div>
<div class="panel" style="left:17px;top:674px;width:910px;height:258px"><div class="ptitle">Top Geo IP/ASN</div><svg width="908" height="256"><rect x="94" y="45" width="1" height="176" fill="#ffffff" fill-opacity="0.165"/><rect x="164" y="45" width="1" height="176" fill="#ffffff" fill-opacity="0.165"/><rect x="235" y="45" width="1" height="176" fill="#ffffff" fill-opacity="0.165"/><rect x="305" y="45" width="1" height="176" fill="#ffffff" fill-opacity="0.165"/><rect x="375" y="45" width="1" height="176" fill="#ffffff" fill-opacity="0.165"/><rect x="445" y="45" width="1" height="176" fill="#ffffff" fill-opacity="0.165"/><rect x="516" y="45" width="1" height="176" fill="#ffffff" fill-opacity="0.165"/><rect x="586" y="45" width="1" height="176" fill="#ffffff" fill-opacity="0.165"/><rect x="656" y="45" width="1" height="176" fill="#ffffff" fill-opacity="0.165"/><rect x="726" y="45" width="1" height="176" fill="#ffffff" fill-opacity="0.165"/><rect x="797" y="45" width="1" height="176" fill="#ffffff" fill-opacity="0.165"/><rect x="867" y="45" width="1" height="176" fill="#ffffff" fill-opacity="0.165"/><rect x="41" y="45" width="843" height="1" fill="#ffffff" fill-opacity="0.165"/><rect x="41" y="88" width="843" height="1" fill="#ffffff" fill-opacity="0.165"/><rect x="41" y="132" width="843" height="1" fill="#ffffff" fill-opacity="0.165"/><rect x="41" y="176" width="843" height="1" fill="#ffffff" fill-opacity="0.165"/><rect x="41" y="220" width="843" height="1" fill="#ffffff" fill-opacity="0.165"/><text class="ax" x="95.2" y="237" text-anchor="middle">18:00</text><text class="ax" x="165.4" y="237" text-anchor="middle">20:00</text><text class="ax" x="235.7" y="237" text-anchor="middle">22:00</text><text class="ax" x="305.9" y="237" text-anchor="middle">00:00</text><text class="ax" x="376.2" y="237" text-anchor="middle">02:00</text><text class="ax" x="446.4" y="237" text-anchor="middle">04:00</text><text class="ax" x="516.7" y="237" text-anchor="middle">06:00</text><text class="ax" x="587.0" y="237" text-anchor="middle">08:00</text><text class="ax" x="657.2" y="237" text-anchor="middle">10:00</text><text class="ax" x="727.5" y="237" text-anchor="middle">12:00</text><text class="ax" x="797.7" y="237" text-anchor="middle">14:00</text><text class="ax" x="868.0" y="237" text-anchor="middle">16:00</text><text class="ax" x="35" y="49.3" text-anchor="end">4 p/s</text><text class="ax" x="35" y="92.3" text-anchor="end">3 p/s</text><text class="ax" x="35" y="136.3" text-anchor="end">2 p/s</text><text class="ax" x="35" y="180.3" text-anchor="end">1 p/s</text><text class="ax" x="35" y="224.3" text-anchor="end">0 p/s</text><polygon points="40.9,220 40.9,154.8 46.8,148.7 52.6,170.6 58.5,88.8 64.3,158.8 70.2,164.4 76.1,157.9 81.9,167.5 87.8,172.3 93.7,124.2 99.5,143.9 105.4,138.2 111.2,171.4 117.1,169.2 123.0,173.6 128.8,151.3 134.7,179.3 140.5,178.0 146.4,154.4 152.3,174.5 158.1,174.5 164.0,49.4 169.9,177.1 175.7,167.5 181.6,164.4 187.4,173.2 193.3,139.5 199.2,144.3 205.0,137.3 210.9,175.8 216.7,178.4 222.6,179.3 228.5,173.2 234.3,169.2 240.2,159.2 246.1,172.3 251.9,184.1 257.8,154.4 263.6,176.2 269.5,182.4 275.4,177.1 281.2,175.4 287.1,185.9 292.9,181.5 298.8,184.1 304.7,180.6 310.5,180.6 316.4,169.7 322.3,185.0 328.1,171.9 334.0,168.4 339.8,173.6 345.7,178.0 351.6,182.4 357.4,166.6 363.3,160.5 369.1,179.3 375.0,182.4 380.9,165.8 386.7,180.2 392.6,185.4 398.5,170.1 404.3,180.2 410.2,182.4 416.0,178.0 421.9,158.8 427.8,185.4 433.6,186.3 439.5,179.3 445.3,185.0 451.2,185.4 457.1,181.5 462.9,173.6 468.8,181.5 474.7,179.3 480.5,165.3 486.4,181.5 492.2,185.0 498.1,177.1 504.0,179.3 509.8,183.2 515.7,185.4 521.5,178.4 527.4,175.8 533.3,185.0 539.1,172.3 545.0,185.0 550.9,185.9 556.7,178.4 562.6,150.4 568.4,175.4 574.3,153.1 580.2,173.2 586.0,181.5 591.9,178.0 597.7,180.2 603.6,185.0 609.5,180.2 615.3,147.8 621.2,162.7 627.1,171.4 632.9,178.4 638.8,176.7 644.6,173.2 650.5,177.6 656.4,149.1 662.2,150.0 668.1,176.2 673.9,145.2 679.8,167.9 685.7,170.1 691.5,175.4 697.4,179.3 703.2,169.2 709.1,180.2 715.0,179.3 720.8,170.1 726.7,181.1 732.6,173.6 738.4,116.3 744.3,175.4 750.1,175.4 756.0,183.2 761.9,176.7 767.7,182.4 773.6,169.2 779.4,171.4 785.3,177.1 791.2,171.4 797.0,170.1 802.9,178.0 808.8,178.4 814.6,175.4 820.5,181.5 826.3,175.4 832.2,164.4 838.1,158.8 843.9,180.2 849.8,186.3 855.6,183.2 861.5,178.4 867.4,176.2 873.2,181.5 879.1,155.7 879.1,220" fill="#8f3bb8" fill-opacity="0.08"/><polygon points="40.9,220 40.9,178.0 46.8,183.9 52.6,184.4 58.5,166.6 64.3,167.5 70.2,181.6 76.1,185.0 81.9,178.1 87.8,182.4 93.7,156.6 99.5,180.6 105.4,178.9 111.2,184.2 117.1,179.2 123.0,183.7 128.8,164.4 134.7,178.8 140.5,178.9 146.4,184.0 152.3,183.7 158.1,182.3 164.0,156.6 169.9,182.4 175.7,173.6 181.6,183.5 187.4,179.7 193.3,178.4 199.2,185.1 205.0,181.0 210.9,179.5 216.7,185.1 222.6,178.8 228.5,184.5 234.3,180.7 240.2,181.1 246.1,180.5 251.9,183.0 257.8,182.1 263.6,180.8 269.5,182.1 275.4,180.2 281.2,181.9 287.1,182.0 292.9,185.3 298.8,180.6 304.7,181.6 310.5,183.6 316.4,179.4 322.3,179.3 328.1,181.8 334.0,184.0 339.8,181.7 345.7,184.6 351.6,184.4 357.4,182.0 363.3,160.5 369.1,182.0 375.0,181.4 380.9,185.1 386.7,180.4 392.6,184.8 398.5,179.7 404.3,179.3 410.2,181.4 416.0,185.0 421.9,181.5 427.8,182.5 433.6,177.9 439.5,184.4 445.3,178.7 451.2,177.6 457.1,179.7 462.9,179.0 468.8,183.9 474.7,177.7 480.5,181.6 486.4,177.9 492.2,178.2 498.1,184.1 504.0,179.2 509.8,178.1 515.7,184.9 521.5,182.7 527.4,179.5 533.3,184.2 539.1,178.4 545.0,183.3 550.9,179.0 556.7,184.3 562.6,172.3 568.4,178.2 574.3,183.8 580.2,183.4 586.0,181.5 591.9,182.9 597.7,185.1 603.6,184.0 609.5,184.2 615.3,178.1 621.2,180.1 627.1,178.4 632.9,184.1 638.8,179.3 644.6,184.5 650.5,181.3 656.4,180.4 662.2,159.6 668.1,178.6 673.9,181.1 679.8,180.9 685.7,178.5 691.5,184.6 697.4,177.6 703.2,180.5 709.1,182.3 715.0,179.2 720.8,183.4 726.7,177.6 732.6,180.9 738.4,172.3 744.3,179.4 750.1,182.0 756.0,184.0 761.9,179.6 767.7,185.1 773.6,179.0 779.4,183.4 785.3,180.4 791.2,177.7 797.0,180.8 802.9,180.2 808.8,183.0 814.6,185.4 820.5,185.2 826.3,184.3 832.2,180.6 838.1,182.0 843.9,181.4 849.8,178.4 855.6,184.4 861.5,183.6 867.4,180.3 873.2,185.3 879.1,175.4 879.1,220" fill="#1f60c4" fill-opacity="0.07"/><polygon points="40.9,220 40.9,176.9 46.8,159.2 52.6,198.1 58.5,163.6 64.3,183.2 70.2,180.2 76.1,181.5 81.9,186.3 87.8,184.1 93.7,169.2 99.5,147.4 105.4,162.7 111.2,178.4 117.1,198.1 123.0,201.6 128.8,199.4 134.7,203.8 140.5,198.1 146.4,192.9 152.3,195.1 158.1,188.1 164.0,71.2 169.9,199.0 175.7,185.0 181.6,189.4 187.4,192.9 193.3,170.1 199.2,167.9 205.0,173.2 210.9,195.1 216.7,201.6 222.6,201.2 228.5,190.2 234.3,180.2 240.2,199.0 246.1,208.6 251.9,216.3 257.8,191.6 263.6,202.9 269.5,213.0 275.4,200.8 281.2,200.8 287.1,213.9 292.9,215.6 298.8,212.6 304.7,206.4 310.5,213.0 316.4,198.1 322.3,218.7 328.1,202.9 334.0,192.9 339.8,208.2 345.7,208.6 351.6,209.5 357.4,202.1 363.3,176.7 369.1,208.6 375.0,213.4 380.9,210.8 386.7,208.2 392.6,216.5 398.5,195.5 404.3,209.1 410.2,213.4 416.0,212.6 421.9,198.6 427.8,212.6 433.6,211.2 439.5,202.5 445.3,206.4 451.2,211.7 457.1,206.0 462.9,171.4 468.8,202.9 474.7,209.9 480.5,201.6 486.4,213.9 492.2,205.6 498.1,213.9 504.0,208.6 509.8,210.8 515.7,213.9 521.5,215.6 527.4,207.8 533.3,213.4 539.1,198.6 545.0,213.4 550.9,216.9 556.7,211.7 562.6,160.5 568.4,212.6 574.3,191.6 580.2,200.3 586.0,209.5 591.9,213.4 597.7,206.9 603.6,214.8 609.5,212.6 615.3,154.4 621.2,198.1 627.1,209.1 632.9,209.5 638.8,208.2 644.6,200.8 650.5,208.2 656.4,172.3 662.2,166.6 668.1,205.1 673.9,173.6 679.8,199.0 685.7,197.2 691.5,203.8 697.4,210.8 703.2,204.7 709.1,206.0 715.0,198.1 720.8,193.3 726.7,202.1 732.6,207.8 738.4,166.6 744.3,210.8 750.1,209.5 756.0,211.7 761.9,214.8 767.7,207.3 773.6,198.6 779.4,210.4 785.3,206.0 791.2,201.6 797.0,198.6 802.9,211.7 808.8,207.8 814.6,207.8 820.5,210.8 826.3,206.0 832.2,203.8 838.1,185.4 843.9,195.9 849.8,213.9 855.6,207.3 861.5,200.3 867.4,209.1 873.2,205.1 879.1,185.4 879.1,220" fill="#ffa860" fill-opacity="0.14"/><polygon points="40.9,220 40.9,201.2 46.8,194.4 52.6,210.8 58.5,176.2 64.3,203.1 70.2,201.7 76.1,204.0 81.9,204.3 87.8,204.0 93.7,198.8 99.5,185.4 105.4,195.3 111.2,202.8 117.1,211.9 123.0,211.1 128.8,209.1 134.7,211.5 140.5,210.6 146.4,208.8 152.3,210.9 158.1,205.0 164.0,75.6 169.9,211.2 175.7,203.6 181.6,206.5 187.4,205.9 193.3,185.0 199.2,197.7 205.0,195.9 210.9,210.8 216.7,211.6 222.6,211.9 228.5,207.8 234.3,204.0 240.2,209.3 246.1,217.0 251.9,218.1 257.8,205.3 263.6,213.9 269.5,218.2 275.4,210.9 281.2,211.3 287.1,216.6 292.9,216.7 298.8,218.1 304.7,214.7 310.5,217.7 316.4,212.1 322.3,217.7 328.1,211.1 334.0,206.9 339.8,216.8 345.7,213.4 351.6,214.2 357.4,212.1 363.3,199.5 369.1,215.1 375.0,218.2 380.9,217.6 386.7,215.9 392.6,220.0 398.5,209.7 404.3,214.0 410.2,216.2 416.0,215.1 421.9,209.4 427.8,217.7 433.6,215.8 439.5,212.4 445.3,212.6 451.2,216.2 457.1,214.7 462.9,197.5 468.8,210.3 474.7,216.7 480.5,210.1 486.4,219.4 492.2,214.6 498.1,218.4 504.0,213.8 509.8,213.9 515.7,216.2 521.5,218.8 527.4,212.8 533.3,217.8 539.1,211.5 545.0,215.3 550.9,218.1 556.7,215.4 562.6,192.5 568.4,214.6 574.3,207.3 580.2,209.7 586.0,214.4 591.9,215.5 597.7,214.4 603.6,216.7 609.5,216.3 615.3,198.1 621.2,211.4 627.1,214.5 632.9,217.1 638.8,212.9 644.6,212.9 650.5,216.8 656.4,200.3 662.2,194.1 668.1,214.0 673.9,200.3 679.8,212.6 685.7,211.8 691.5,211.9 697.4,215.3 703.2,212.2 709.1,212.7 715.0,212.1 720.8,207.6 726.7,212.5 732.6,213.1 738.4,189.4 744.3,214.2 750.1,217.2 756.0,214.7 761.9,215.8 767.7,212.3 773.6,212.1 779.4,217.0 785.3,215.4 791.2,213.8 797.0,208.8 802.9,214.9 808.8,213.9 814.6,213.1 820.5,215.3 826.3,214.6 832.2,214.5 838.1,206.2 843.9,208.0 849.8,218.5 855.6,215.1 861.5,211.5 867.4,217.2 873.2,214.4 879.1,205.4 879.1,220" fill="#6b3fa0" fill-opacity="0.1"/><polyline points="40.9,201.2 46.8,194.4 52.6,210.8 58.5,176.2 64.3,203.1 70.2,201.7 76.1,204.0 81.9,204.3 87.8,204.0 93.7,198.8 99.5,185.4 105.4,195.3 111.2,202.8 117.1,211.9 123.0,211.1 128.8,209.1 134.7,211.5 140.5,210.6 146.4,208.8 152.3,210.9 158.1,205.0 164.0,75.6 169.9,211.2 175.7,203.6 181.6,206.5 187.4,205.9 193.3,185.0 199.2,197.7 205.0,195.9 210.9,210.8 216.7,211.6 222.6,211.9 228.5,207.8 234.3,204.0 240.2,209.3 246.1,217.0 251.9,218.1 257.8,205.3 263.6,213.9 269.5,218.2 275.4,210.9 281.2,211.3 287.1,216.6 292.9,216.7 298.8,218.1 304.7,214.7 310.5,217.7 316.4,212.1 322.3,217.7 328.1,211.1 334.0,206.9 339.8,216.8 345.7,213.4 351.6,214.2 357.4,212.1 363.3,199.5 369.1,215.1 375.0,218.2 380.9,217.6 386.7,215.9 392.6,220.0 398.5,209.7 404.3,214.0 410.2,216.2 416.0,215.1 421.9,209.4 427.8,217.7 433.6,215.8 439.5,212.4 445.3,212.6 451.2,216.2 457.1,214.7 462.9,197.5 468.8,210.3 474.7,216.7 480.5,210.1 486.4,219.4 492.2,214.6 498.1,218.4 504.0,213.8 509.8,213.9 515.7,216.2 521.5,218.8 527.4,212.8 533.3,217.8 539.1,211.5 545.0,215.3 550.9,218.1 556.7,215.4 562.6,192.5 568.4,214.6 574.3,207.3 580.2,209.7 586.0,214.4 591.9,215.5 597.7,214.4 603.6,216.7 609.5,216.3 615.3,198.1 621.2,211.4 627.1,214.5 632.9,217.1 638.8,212.9 644.6,212.9 650.5,216.8 656.4,200.3 662.2,194.1 668.1,214.0 673.9,200.3 679.8,212.6 685.7,211.8 691.5,211.9 697.4,215.3 703.2,212.2 709.1,212.7 715.0,212.1 720.8,207.6 726.7,212.5 732.6,213.1 738.4,189.4 744.3,214.2 750.1,217.2 756.0,214.7 761.9,215.8 767.7,212.3 773.6,212.1 779.4,217.0 785.3,215.4 791.2,213.8 797.0,208.8 802.9,214.9 808.8,213.9 814.6,213.1 820.5,215.3 826.3,214.6 832.2,214.5 838.1,206.2 843.9,208.0 849.8,218.5 855.6,215.1 861.5,211.5 867.4,217.2 873.2,214.4 879.1,205.4" fill="none" stroke="#4a2b66" stroke-width="1" stroke-opacity="0.9" stroke-linejoin="round"/><polyline points="40.9,178.0 46.8,183.9 52.6,184.4 58.5,166.6 64.3,167.5 70.2,181.6 76.1,185.0 81.9,178.1 87.8,182.4 93.7,156.6 99.5,180.6 105.4,178.9 111.2,184.2 117.1,179.2 123.0,183.7 128.8,164.4 134.7,178.8 140.5,178.9 146.4,184.0 152.3,183.7 158.1,182.3 164.0,156.6 169.9,182.4 175.7,173.6 181.6,183.5 187.4,179.7 193.3,178.4 199.2,185.1 205.0,181.0 210.9,179.5 216.7,185.1 222.6,178.8 228.5,184.5 234.3,180.7 240.2,181.1 246.1,180.5 251.9,183.0 257.8,182.1 263.6,180.8 269.5,182.1 275.4,180.2 281.2,181.9 287.1,182.0 292.9,185.3 298.8,180.6 304.7,181.6 310.5,183.6 316.4,179.4 322.3,179.3 328.1,181.8 334.0,184.0 339.8,181.7 345.7,184.6 351.6,184.4 357.4,182.0 363.3,160.5 369.1,182.0 375.0,181.4 380.9,185.1 386.7,180.4 392.6,184.8 398.5,179.7 404.3,179.3 410.2,181.4 416.0,185.0 421.9,181.5 427.8,182.5 433.6,177.9 439.5,184.4 445.3,178.7 451.2,177.6 457.1,179.7 462.9,179.0 468.8,183.9 474.7,177.7 480.5,181.6 486.4,177.9 492.2,178.2 498.1,184.1 504.0,179.2 509.8,178.1 515.7,184.9 521.5,182.7 527.4,179.5 533.3,184.2 539.1,178.4 545.0,183.3 550.9,179.0 556.7,184.3 562.6,172.3 568.4,178.2 574.3,183.8 580.2,183.4 586.0,181.5 591.9,182.9 597.7,185.1 603.6,184.0 609.5,184.2 615.3,178.1 621.2,180.1 627.1,178.4 632.9,184.1 638.8,179.3 644.6,184.5 650.5,181.3 656.4,180.4 662.2,159.6 668.1,178.6 673.9,181.1 679.8,180.9 685.7,178.5 691.5,184.6 697.4,177.6 703.2,180.5 709.1,182.3 715.0,179.2 720.8,183.4 726.7,177.6 732.6,180.9 738.4,172.3 744.3,179.4 750.1,182.0 756.0,184.0 761.9,179.6 767.7,185.1 773.6,179.0 779.4,183.4 785.3,180.4 791.2,177.7 797.0,180.8 802.9,180.2 808.8,183.0 814.6,185.4 820.5,185.2 826.3,184.3 832.2,180.6 838.1,182.0 843.9,181.4 849.8,178.4 855.6,184.4 861.5,183.6 867.4,180.3 873.2,185.3 879.1,175.4" fill="none" stroke="#0a3157" stroke-width="1.1" stroke-opacity="1" stroke-linejoin="round"/><polyline points="40.9,154.8 46.8,148.7 52.6,170.6 58.5,88.8 64.3,158.8 70.2,164.4 76.1,157.9 81.9,167.5 87.8,172.3 93.7,124.2 99.5,143.9 105.4,138.2 111.2,171.4 117.1,169.2 123.0,173.6 128.8,151.3 134.7,179.3 140.5,178.0 146.4,154.4 152.3,174.5 158.1,174.5 164.0,49.4 169.9,177.1 175.7,167.5 181.6,164.4 187.4,173.2 193.3,139.5 199.2,144.3 205.0,137.3 210.9,175.8 216.7,178.4 222.6,179.3 228.5,173.2 234.3,169.2 240.2,159.2 246.1,172.3 251.9,184.1 257.8,154.4 263.6,176.2 269.5,182.4 275.4,177.1 281.2,175.4 287.1,185.9 292.9,181.5 298.8,184.1 304.7,180.6 310.5,180.6 316.4,169.7 322.3,185.0 328.1,171.9 334.0,168.4 339.8,173.6 345.7,178.0 351.6,182.4 357.4,166.6 363.3,160.5 369.1,179.3 375.0,182.4 380.9,165.8 386.7,180.2 392.6,185.4 398.5,170.1 404.3,180.2 410.2,182.4 416.0,178.0 421.9,158.8 427.8,185.4 433.6,186.3 439.5,179.3 445.3,185.0 451.2,185.4 457.1,181.5 462.9,173.6 468.8,181.5 474.7,179.3 480.5,165.3 486.4,181.5 492.2,185.0 498.1,177.1 504.0,179.3 509.8,183.2 515.7,185.4 521.5,178.4 527.4,175.8 533.3,185.0 539.1,172.3 545.0,185.0 550.9,185.9 556.7,178.4 562.6,150.4 568.4,175.4 574.3,153.1 580.2,173.2 586.0,181.5 591.9,178.0 597.7,180.2 603.6,185.0 609.5,180.2 615.3,147.8 621.2,162.7 627.1,171.4 632.9,178.4 638.8,176.7 644.6,173.2 650.5,177.6 656.4,149.1 662.2,150.0 668.1,176.2 673.9,145.2 679.8,167.9 685.7,170.1 691.5,175.4 697.4,179.3 703.2,169.2 709.1,180.2 715.0,179.3 720.8,170.1 726.7,181.1 732.6,173.6 738.4,116.3 744.3,175.4 750.1,175.4 756.0,183.2 761.9,176.7 767.7,182.4 773.6,169.2 779.4,171.4 785.3,177.1 791.2,171.4 797.0,170.1 802.9,178.0 808.8,178.4 814.6,175.4 820.5,181.5 826.3,175.4 832.2,164.4 838.1,158.8 843.9,180.2 849.8,186.3 855.6,183.2 861.5,178.4 867.4,176.2 873.2,181.5 879.1,155.7" fill="none" stroke="#7c2275" stroke-width="1.1" stroke-opacity="1" stroke-linejoin="round"/><polyline points="70.2,208.4 76.1,218.7 81.9,215.4" fill="none" stroke="#fbd1e4" stroke-width="1" stroke-opacity="0.9" stroke-linejoin="round"/><polyline points="93.7,218.2 99.5,216.4 105.4,215.7 111.2,219.6 117.1,219.1" fill="none" stroke="#fbd1e4" stroke-width="1" stroke-opacity="0.9" stroke-linejoin="round"/><polyline points="134.7,219.3 140.5,219.6 146.4,218.7 152.3,219.3 158.1,209.5" fill="none" stroke="#fbd1e4" stroke-width="1" stroke-opacity="0.9" stroke-linejoin="round"/><polyline points="187.4,211.6 193.3,219.3 199.2,219.6 205.0,208.4 210.9,218.2 216.7,215.3 222.6,218.7 228.5,207.6" fill="none" stroke="#fbd1e4" stroke-width="1" stroke-opacity="0.9" stroke-linejoin="round"/><polyline points="240.2,217.7 246.1,219.1 251.9,218.2 257.8,218.7 263.6,199.2" fill="none" stroke="#fbd1e4" stroke-width="1" stroke-opacity="0.9" stroke-linejoin="round"/><polyline points="310.5,218.2 316.4,219.1" fill="none" stroke="#fbd1e4" stroke-width="1" stroke-opacity="0.9" stroke-linejoin="round"/><polyline points="345.7,218.7 351.6,219.1 357.4,218.7 363.3,219.1 369.1,219.3 375.0,219.3 380.9,219.1 386.7,218.2" fill="none" stroke="#fbd1e4" stroke-width="1" stroke-opacity="0.9" stroke-linejoin="round"/><polyline points="404.3,219.3 410.2,215.4 416.0,219.3 421.9,219.3 427.8,219.6 433.6,219.6 439.5,219.3 445.3,208.2 451.2,216.1 457.1,219.6 462.9,218.7 468.8,219.6" fill="none" stroke="#fbd1e4" stroke-width="1" stroke-opacity="0.9" stroke-linejoin="round"/><polyline points="515.7,218.2 521.5,211.5 527.4,219.1 533.3,218.7 539.1,219.3" fill="none" stroke="#fbd1e4" stroke-width="1" stroke-opacity="0.9" stroke-linejoin="round"/><polyline points="586.0,218.7 591.9,215.2 597.7,218.2 603.6,215.1 609.5,218.7 615.3,219.1 621.2,219.6 627.1,216.9 632.9,219.3 638.8,218.7 644.6,219.6 650.5,218.7" fill="none" stroke="#fbd1e4" stroke-width="1" stroke-opacity="0.9" stroke-linejoin="round"/><polyline points="668.1,219.6 673.9,218.7 679.8,212.7 685.7,219.3 691.5,219.3 697.4,219.6 703.2,216.0 709.1,218.7 715.0,219.1 720.8,218.7 726.7,216.0 732.6,207.9" fill="none" stroke="#fbd1e4" stroke-width="1" stroke-opacity="0.9" stroke-linejoin="round"/><polyline points="744.3,211.1 750.1,219.1 756.0,219.6 761.9,218.7 767.7,209.3 773.6,218.2 779.4,219.3 785.3,218.7 791.2,210.0 797.0,218.7 802.9,219.3 808.8,219.6" fill="none" stroke="#fbd1e4" stroke-width="1" stroke-opacity="0.9" stroke-linejoin="round"/><polyline points="826.3,219.3 832.2,217.2 838.1,218.7 843.9,219.1 849.8,215.3" fill="none" stroke="#fbd1e4" stroke-width="1" stroke-opacity="0.9" stroke-linejoin="round"/><polyline points="52.6,218.7 58.5,218.7" fill="none" stroke="#9ac48a" stroke-width="1" stroke-opacity="0.9" stroke-linejoin="round"/><polyline points="76.1,219.1 81.9,219.1 87.8,218.7 93.7,219.6 99.5,219.1" fill="none" stroke="#9ac48a" stroke-width="1" stroke-opacity="0.9" stroke-linejoin="round"/><polyline points="117.1,217.6 123.0,214.2 128.8,217.3" fill="none" stroke="#9ac48a" stroke-width="1" stroke-opacity="0.9" stroke-linejoin="round"/><polyline points="158.1,219.6 164.0,219.6 169.9,219.1 175.7,218.2 181.6,219.3 187.4,218.7 193.3,219.3 199.2,218.7 205.0,217.2 210.9,215.4 216.7,215.2 222.6,214.7" fill="none" stroke="#9ac48a" stroke-width="1" stroke-opacity="0.9" stroke-linejoin="round"/><polyline points="251.9,219.3 257.8,218.7" fill="none" stroke="#9ac48a" stroke-width="1" stroke-opacity="0.9" stroke-linejoin="round"/><polyline points="269.5,218.7 275.4,219.3 281.2,218.2 287.1,218.7 292.9,208.8 298.8,219.3 304.7,219.6 310.5,219.1" fill="none" stroke="#9ac48a" stroke-width="1" stroke-opacity="0.9" stroke-linejoin="round"/><polyline points="357.4,219.1 363.3,216.3 369.1,219.6 375.0,219.1 380.9,219.6 386.7,219.6 392.6,219.1 398.5,217.4 404.3,219.3 410.2,218.7 416.0,219.1 421.9,219.1" fill="none" stroke="#9ac48a" stroke-width="1" stroke-opacity="0.9" stroke-linejoin="round"/><polyline points="451.2,215.6 457.1,211.6 462.9,219.1 468.8,219.1 474.7,218.7" fill="none" stroke="#9ac48a" stroke-width="1" stroke-opacity="0.9" stroke-linejoin="round"/><polyline points="521.5,219.1 527.4,216.5 533.3,218.7" fill="none" stroke="#9ac48a" stroke-width="1" stroke-opacity="0.9" stroke-linejoin="round"/><polyline points="545.0,219.1 550.9,219.6 556.7,217.7" fill="none" stroke="#9ac48a" stroke-width="1" stroke-opacity="0.9" stroke-linejoin="round"/><polyline points="603.6,218.7 609.5,219.6 615.3,218.7 621.2,219.6 627.1,214.2 632.9,218.2 638.8,218.2 644.6,217.5" fill="none" stroke="#9ac48a" stroke-width="1" stroke-opacity="0.9" stroke-linejoin="round"/><polyline points="656.4,219.3 662.2,219.3 668.1,216.2 673.9,219.6 679.8,219.3 685.7,215.6 691.5,219.1 697.4,219.6 703.2,218.7 709.1,218.2 715.0,213.1 720.8,219.6" fill="none" stroke="#9ac48a" stroke-width="1" stroke-opacity="0.9" stroke-linejoin="round"/><polyline points="732.6,218.7 738.4,219.6 744.3,218.2 750.1,219.3 756.0,218.7" fill="none" stroke="#9ac48a" stroke-width="1" stroke-opacity="0.9" stroke-linejoin="round"/><polyline points="785.3,219.6 791.2,219.6 797.0,203.4 802.9,219.6 808.8,219.6 814.6,218.2 820.5,219.3 826.3,211.0 832.2,215.1 838.1,219.6 843.9,218.2 849.8,216.0" fill="none" stroke="#9ac48a" stroke-width="1" stroke-opacity="0.9" stroke-linejoin="round"/><polyline points="70.2,217.5 76.1,218.2 81.9,218.7 87.8,219.1 93.7,218.2 99.5,216.0 105.4,219.6 111.2,219.3 117.1,218.7 123.0,218.7 128.8,208.3 134.7,219.1" fill="none" stroke="#f2cc0c" stroke-width="1" stroke-opacity="0.9" stroke-linejoin="round"/><polyline points="193.3,217.8 199.2,219.1 205.0,219.3 210.9,218.7 216.7,219.3 222.6,216.7 228.5,219.1 234.3,219.3" fill="none" stroke="#f2cc0c" stroke-width="1" stroke-opacity="0.9" stroke-linejoin="round"/><polyline points="246.1,214.6 251.9,215.6 257.8,218.2" fill="none" stroke="#f2cc0c" stroke-width="1" stroke-opacity="0.9" stroke-linejoin="round"/><polyline points="304.7,218.2 310.5,218.7 316.4,219.3" fill="none" stroke="#f2cc0c" stroke-width="1" stroke-opacity="0.9" stroke-linejoin="round"/><polyline points="345.7,218.7 351.6,219.3 357.4,209.6 363.3,218.7 369.1,219.6 375.0,219.1 380.9,216.9 386.7,219.1" fill="none" stroke="#f2cc0c" stroke-width="1" stroke-opacity="0.9" stroke-linejoin="round"/><polyline points="416.0,219.3 421.9,219.3 427.8,219.1 433.6,218.2 439.5,218.2" fill="none" stroke="#f2cc0c" stroke-width="1" stroke-opacity="0.9" stroke-linejoin="round"/><polyline points="457.1,218.7 462.9,219.6" fill="none" stroke="#f2cc0c" stroke-width="1" stroke-opacity="0.9" stroke-linejoin="round"/><polyline points="492.2,219.6 498.1,218.2 504.0,219.1 509.8,219.6 515.7,219.3 521.5,203.4 527.4,218.2 533.3,219.1 539.1,218.7 545.0,214.6 550.9,211.8 556.7,219.3" fill="none" stroke="#f2cc0c" stroke-width="1" stroke-opacity="0.9" stroke-linejoin="round"/><polyline points="574.3,219.6 580.2,219.1 586.0,216.0 591.9,207.5 597.7,218.2" fill="none" stroke="#f2cc0c" stroke-width="1" stroke-opacity="0.9" stroke-linejoin="round"/><polyline points="673.9,219.6 679.8,209.0 685.7,218.7 691.5,216.4 697.4,219.3 703.2,219.1 709.1,213.0 715.0,219.6" fill="none" stroke="#f2cc0c" stroke-width="1" stroke-opacity="0.9" stroke-linejoin="round"/><polyline points="726.7,215.0 732.6,218.7 738.4,219.3" fill="none" stroke="#f2cc0c" stroke-width="1" stroke-opacity="0.9" stroke-linejoin="round"/><polyline points="797.0,219.6 802.9,219.1 808.8,219.6 814.6,218.7 820.5,219.3 826.3,214.2 832.2,216.0 838.1,208.2" fill="none" stroke="#f2cc0c" stroke-width="1" stroke-opacity="0.9" stroke-linejoin="round"/><polyline points="855.6,218.2 861.5,214.3" fill="none" stroke="#f2cc0c" stroke-width="1" stroke-opacity="0.9" stroke-linejoin="round"/><polyline points="105.4,215.9 111.2,219.3 117.1,219.6" fill="none" stroke="#e07bd0" stroke-width="1" stroke-opacity="0.9" stroke-linejoin="round"/><polyline points="134.7,219.3 140.5,219.3 146.4,218.7 152.3,219.6 158.1,219.1 164.0,219.3 169.9,219.6 175.7,218.7 181.6,218.2 187.4,219.3 193.3,219.1 199.2,219.3" fill="none" stroke="#e07bd0" stroke-width="1" stroke-opacity="0.9" stroke-linejoin="round"/><polyline points="228.5,196.0 234.3,212.8 240.2,219.3 246.1,219.1 251.9,219.6" fill="none" stroke="#e07bd0" stroke-width="1" stroke-opacity="0.9" stroke-linejoin="round"/><polyline points="298.8,219.3 304.7,218.2 310.5,219.1 316.4,218.7 322.3,218.2 328.1,219.3 334.0,219.3 339.8,217.0" fill="none" stroke="#e07bd0" stroke-width="1" stroke-opacity="0.9" stroke-linejoin="round"/><polyline points="380.9,218.2 386.7,219.3" fill="none" stroke="#e07bd0" stroke-width="1" stroke-opacity="0.9" stroke-linejoin="round"/><polyline points="416.0,218.2 421.9,219.6" fill="none" stroke="#e07bd0" stroke-width="1" stroke-opacity="0.9" stroke-linejoin="round"/><polyline points="451.2,218.7 457.1,218.7 462.9,210.3" fill="none" stroke="#e07bd0" stroke-width="1" stroke-opacity="0.9" stroke-linejoin="round"/><polyline points="492.2,219.1 498.1,219.1" fill="none" stroke="#e07bd0" stroke-width="1" stroke-opacity="0.9" stroke-linejoin="round"/><polyline points="509.8,218.7 515.7,213.0 521.5,219.3" fill="none" stroke="#e07bd0" stroke-width="1" stroke-opacity="0.9" stroke-linejoin="round"/><polyline points="550.9,215.5 556.7,216.7 562.6,218.7 568.4,219.6 574.3,218.2 580.2,219.3 586.0,212.0 591.9,219.6 597.7,218.2 603.6,217.7 609.5,219.3 615.3,218.2" fill="none" stroke="#e07bd0" stroke-width="1" stroke-opacity="0.9" stroke-linejoin="round"/><polyline points="662.2,218.7 668.1,219.6 673.9,217.6 679.8,218.7 685.7,219.1 691.5,219.6 697.4,219.3 703.2,219.3" fill="none" stroke="#e07bd0" stroke-width="1" stroke-opacity="0.9" stroke-linejoin="round"/><polyline points="720.8,218.7 726.7,217.2" fill="none" stroke="#e07bd0" stroke-width="1" stroke-opacity="0.9" stroke-linejoin="round"/><polyline points="738.4,218.7 744.3,218.2 750.1,218.7 756.0,213.1 761.9,218.7 767.7,219.1 773.6,214.5 779.4,219.1 785.3,214.5 791.2,218.2 797.0,219.1 802.9,218.7" fill="none" stroke="#e07bd0" stroke-width="1" stroke-opacity="0.9" stroke-linejoin="round"/><polyline points="814.6,219.3 820.5,218.7 826.3,219.6" fill="none" stroke="#e07bd0" stroke-width="1" stroke-opacity="0.9" stroke-linejoin="round"/><polyline points="843.9,218.7 849.8,214.1" fill="none" stroke="#e07bd0" stroke-width="1" stroke-opacity="0.9" stroke-linejoin="round"/><polyline points="70.2,219.6 76.1,219.1" fill="none" stroke="#5ec4da" stroke-width="1" stroke-opacity="0.9" stroke-linejoin="round"/><polyline points="87.8,219.3 93.7,211.6 99.5,219.3 105.4,218.2 111.2,207.4 117.1,212.9 123.0,219.3 128.8,218.2 134.7,219.1" fill="none" stroke="#5ec4da" stroke-width="1" stroke-opacity="0.9" stroke-linejoin="round"/><polyline points="164.0,219.6 169.9,216.7" fill="none" stroke="#5ec4da" stroke-width="1" stroke-opacity="0.9" stroke-linejoin="round"/><polyline points="240.2,218.2 246.1,218.7 251.9,219.1" fill="none" stroke="#5ec4da" stroke-width="1" stroke-opacity="0.9" stroke-linejoin="round"/><polyline points="304.7,218.2 310.5,219.1 316.4,219.3 322.3,219.1 328.1,219.1 334.0,217.0 339.8,219.6 345.7,219.6 351.6,219.1" fill="none" stroke="#5ec4da" stroke-width="1" stroke-opacity="0.9" stroke-linejoin="round"/><polyline points="433.6,219.3 439.5,218.2 445.3,219.1" fill="none" stroke="#5ec4da" stroke-width="1" stroke-opacity="0.9" stroke-linejoin="round"/><polyline points="533.3,218.7 539.1,219.3 545.0,219.6 550.9,218.2 556.7,218.7 562.6,218.2 568.4,219.1 574.3,215.4 580.2,218.7" fill="none" stroke="#5ec4da" stroke-width="1" stroke-opacity="0.9" stroke-linejoin="round"/><polyline points="638.8,219.1 644.6,218.7 650.5,218.2 656.4,219.1 662.2,218.7 668.1,219.1" fill="none" stroke="#5ec4da" stroke-width="1" stroke-opacity="0.9" stroke-linejoin="round"/><polyline points="685.7,219.3 691.5,218.7 697.4,219.6 703.2,216.5 709.1,209.4 715.0,219.1 720.8,218.7 726.7,214.0 732.6,219.1" fill="none" stroke="#5ec4da" stroke-width="1" stroke-opacity="0.9" stroke-linejoin="round"/><polyline points="773.6,218.2 779.4,215.7 785.3,205.7 791.2,218.7 797.0,219.1 802.9,219.1" fill="none" stroke="#5ec4da" stroke-width="1" stroke-opacity="0.9" stroke-linejoin="round"/><polyline points="58.5,218.2 64.3,215.5 70.2,219.6 76.1,219.1 81.9,219.6 87.8,215.8" fill="none" stroke="#ff9830" stroke-width="1" stroke-opacity="0.9" stroke-linejoin="round"/><polyline points="99.5,218.2 105.4,216.2" fill="none" stroke="#ff9830" stroke-width="1" stroke-opacity="0.9" stroke-linejoin="round"/><polyline points="123.0,218.2 128.8,219.3 134.7,219.6 140.5,218.2 146.4,218.2 152.3,199.1 158.1,218.7 164.0,219.6 169.9,218.2" fill="none" stroke="#ff9830" stroke-width="1" stroke-opacity="0.9" stroke-linejoin="round"/><polyline points="181.6,219.6 187.4,219.6" fill="none" stroke="#ff9830" stroke-width="1" stroke-opacity="0.9" stroke-linejoin="round"/><polyline points="246.1,214.3 251.9,219.3" fill="none" stroke="#ff9830" stroke-width="1" stroke-opacity="0.9" stroke-linejoin="round"/><polyline points="363.3,215.4 369.1,217.6 375.0,218.2 380.9,219.3 386.7,219.3 392.6,219.6" fill="none" stroke="#ff9830" stroke-width="1" stroke-opacity="0.9" stroke-linejoin="round"/><polyline points="521.5,219.3 527.4,215.5 533.3,210.6 539.1,219.3" fill="none" stroke="#ff9830" stroke-width="1" stroke-opacity="0.9" stroke-linejoin="round"/><polyline points="668.1,218.7 673.9,213.0 679.8,218.2 685.7,219.1" fill="none" stroke="#ff9830" stroke-width="1" stroke-opacity="0.9" stroke-linejoin="round"/><polyline points="715.0,219.3 720.8,219.3 726.7,219.3 732.6,219.1 738.4,219.1 744.3,218.2" fill="none" stroke="#ff9830" stroke-width="1" stroke-opacity="0.9" stroke-linejoin="round"/><polyline points="832.2,219.6 838.1,210.7 843.9,209.8 849.8,218.7" fill="none" stroke="#ff9830" stroke-width="1" stroke-opacity="0.9" stroke-linejoin="round"/><polyline points="873.2,219.6 879.1,219.6" fill="none" stroke="#ff9830" stroke-width="1" stroke-opacity="0.9" stroke-linejoin="round"/><polyline points="128.8,219.3 134.7,219.1 140.5,218.7 146.4,218.2 152.3,218.7 158.1,219.3" fill="none" stroke="#c4a2e6" stroke-width="1" stroke-opacity="0.9" stroke-linejoin="round"/><polyline points="246.1,219.1 251.9,218.7 257.8,219.1 263.6,218.7 269.5,219.3 275.4,219.6" fill="none" stroke="#c4a2e6" stroke-width="1" stroke-opacity="0.9" stroke-linejoin="round"/><polyline points="334.0,219.1 339.8,214.8 345.7,218.2 351.6,219.6 357.4,219.6 363.3,219.3 369.1,219.6 375.0,219.1 380.9,214.8" fill="none" stroke="#c4a2e6" stroke-width="1" stroke-opacity="0.9" stroke-linejoin="round"/><polyline points="445.3,216.0 451.2,219.3 457.1,212.3 462.9,219.1" fill="none" stroke="#c4a2e6" stroke-width="1" stroke-opacity="0.9" stroke-linejoin="round"/><polyline points="509.8,219.6 515.7,219.6 521.5,218.2 527.4,215.0" fill="none" stroke="#c4a2e6" stroke-width="1" stroke-opacity="0.9" stroke-linejoin="round"/><polyline points="539.1,219.3 545.0,219.1 550.9,219.6 556.7,219.3" fill="none" stroke="#c4a2e6" stroke-width="1" stroke-opacity="0.9" stroke-linejoin="round"/><polyline points="621.2,218.2 627.1,219.6 632.9,219.1 638.8,207.7" fill="none" stroke="#c4a2e6" stroke-width="1" stroke-opacity="0.9" stroke-linejoin="round"/><polyline points="691.5,219.1 697.4,217.5 703.2,218.7" fill="none" stroke="#c4a2e6" stroke-width="1" stroke-opacity="0.9" stroke-linejoin="round"/><polyline points="785.3,219.1 791.2,218.7 797.0,219.3 802.9,218.2" fill="none" stroke="#c4a2e6" stroke-width="1" stroke-opacity="0.9" stroke-linejoin="round"/><polyline points="87.8,218.2 93.7,219.3 99.5,219.3 105.4,212.3 111.2,219.6 117.1,219.1 123.0,218.7 128.8,219.3 134.7,217.8" fill="none" stroke="#e0b400" stroke-width="1" stroke-opacity="0.9" stroke-linejoin="round"/><polyline points="193.3,219.1 199.2,219.3 205.0,217.3 210.9,219.1 216.7,219.6 222.6,219.3" fill="none" stroke="#e0b400" stroke-width="1" stroke-opacity="0.9" stroke-linejoin="round"/><polyline points="369.1,217.4 375.0,219.1 380.9,219.6 386.7,219.1" fill="none" stroke="#e0b400" stroke-width="1" stroke-opacity="0.9" stroke-linejoin="round"/><polyline points="468.8,218.2 474.7,219.6 480.5,218.7" fill="none" stroke="#e0b400" stroke-width="1" stroke-opacity="0.9" stroke-linejoin="round"/><polyline points="492.2,209.7 498.1,218.7 504.0,210.2" fill="none" stroke="#e0b400" stroke-width="1" stroke-opacity="0.9" stroke-linejoin="round"/><polyline points="591.9,219.1 597.7,209.2 603.6,219.1 609.5,219.6 615.3,219.6 621.2,218.7 627.1,216.6 632.9,218.2 638.8,214.2" fill="none" stroke="#e0b400" stroke-width="1" stroke-opacity="0.9" stroke-linejoin="round"/><polyline points="715.0,219.1 720.8,219.1 726.7,219.1" fill="none" stroke="#e0b400" stroke-width="1" stroke-opacity="0.9" stroke-linejoin="round"/><polyline points="814.6,219.6 820.5,218.7" fill="none" stroke="#e0b400" stroke-width="1" stroke-opacity="0.9" stroke-linejoin="round"/><polyline points="46.8,219.6 52.6,219.3" fill="none" stroke="#3274d9" stroke-width="1" stroke-opacity="0.9" stroke-linejoin="round"/><polyline points="99.5,218.2 105.4,214.7 111.2,219.1" fill="none" stroke="#3274d9" stroke-width="1" stroke-opacity="0.9" stroke-linejoin="round"/><polyline points="234.3,218.7 240.2,219.1 246.1,218.7" fill="none" stroke="#3274d9" stroke-width="1" stroke-opacity="0.9" stroke-linejoin="round"/><polyline points="386.7,219.1 392.6,218.7 398.5,210.3" fill="none" stroke="#3274d9" stroke-width="1" stroke-opacity="0.9" stroke-linejoin="round"/><polyline points="556.7,219.3 562.6,219.1 568.4,218.7 574.3,219.3 580.2,218.7 586.0,219.3" fill="none" stroke="#3274d9" stroke-width="1" stroke-opacity="0.9" stroke-linejoin="round"/><polyline points="621.2,219.3 627.1,219.1" fill="none" stroke="#3274d9" stroke-width="1" stroke-opacity="0.9" stroke-linejoin="round"/><polyline points="685.7,218.7 691.5,218.2 697.4,218.2 703.2,209.7 709.1,215.1 715.0,217.3" fill="none" stroke="#3274d9" stroke-width="1" stroke-opacity="0.9" stroke-linejoin="round"/><polyline points="756.0,219.6 761.9,218.2 767.7,218.7 773.6,219.3 779.4,219.6 785.3,218.2 791.2,219.3 797.0,219.6 802.9,218.2" fill="none" stroke="#3274d9" stroke-width="1" stroke-opacity="0.9" stroke-linejoin="round"/><polyline points="820.5,219.3 826.3,219.6 832.2,219.3 838.1,219.1 843.9,219.1 849.8,214.9" fill="none" stroke="#3274d9" stroke-width="1" stroke-opacity="0.9" stroke-linejoin="round"/><polyline points="861.5,219.1 867.4,218.2" fill="none" stroke="#3274d9" stroke-width="1" stroke-opacity="0.9" stroke-linejoin="round"/><polyline points="70.2,218.2 76.1,219.1 81.9,218.2 87.8,219.3 93.7,219.3 99.5,219.6" fill="none" stroke="#c15c17" stroke-width="1" stroke-opacity="0.9" stroke-linejoin="round"/><polyline points="187.4,219.6 193.3,219.6 199.2,217.1 205.0,219.1 210.9,215.2 216.7,215.5" fill="none" stroke="#c15c17" stroke-width="1" stroke-opacity="0.9" stroke-linejoin="round"/><polyline points="240.2,198.0 246.1,218.7 251.9,219.1 257.8,200.4 263.6,219.6 269.5,217.7 275.4,218.2 281.2,218.7 287.1,208.9" fill="none" stroke="#c15c17" stroke-width="1" stroke-opacity="0.9" stroke-linejoin="round"/><polyline points="316.4,218.2 322.3,219.1 328.1,219.3 334.0,219.3" fill="none" stroke="#c15c17" stroke-width="1" stroke-opacity="0.9" stroke-linejoin="round"/><polyline points="433.6,218.7 439.5,219.1 445.3,219.1 451.2,219.1 457.1,219.3 462.9,218.2" fill="none" stroke="#c15c17" stroke-width="1" stroke-opacity="0.9" stroke-linejoin="round"/><polyline points="504.0,219.1 509.8,218.2" fill="none" stroke="#c15c17" stroke-width="1" stroke-opacity="0.9" stroke-linejoin="round"/><polyline points="855.6,219.3 861.5,218.2 867.4,216.5" fill="none" stroke="#c15c17" stroke-width="1" stroke-opacity="0.9" stroke-linejoin="round"/><polyline points="52.6,214.7 58.5,219.3 64.3,213.9" fill="none" stroke="#f9ba8f" stroke-width="1" stroke-opacity="0.9" stroke-linejoin="round"/><polyline points="111.2,219.1 117.1,209.6 123.0,219.1 128.8,218.2 134.7,219.1 140.5,219.3" fill="none" stroke="#f9ba8f" stroke-width="1" stroke-opacity="0.9" stroke-linejoin="round"/><polyline points="222.6,201.6 228.5,216.1 234.3,217.5" fill="none" stroke="#f9ba8f" stroke-width="1" stroke-opacity="0.9" stroke-linejoin="round"/><polyline points="263.6,216.7 269.5,219.6 275.4,215.3" fill="none" stroke="#f9ba8f" stroke-width="1" stroke-opacity="0.9" stroke-linejoin="round"/><polyline points="462.9,219.6 468.8,218.7 474.7,219.1" fill="none" stroke="#f9ba8f" stroke-width="1" stroke-opacity="0.9" stroke-linejoin="round"/><polyline points="504.0,213.9 509.8,218.7 515.7,217.7" fill="none" stroke="#f9ba8f" stroke-width="1" stroke-opacity="0.9" stroke-linejoin="round"/><polyline points="539.1,218.2 545.0,214.5 550.9,219.6" fill="none" stroke="#f9ba8f" stroke-width="1" stroke-opacity="0.9" stroke-linejoin="round"/><polyline points="591.9,218.2 597.7,218.2 603.6,218.2" fill="none" stroke="#f9ba8f" stroke-width="1" stroke-opacity="0.9" stroke-linejoin="round"/><polyline points="644.6,218.2 650.5,218.7 656.4,214.8" fill="none" stroke="#f9ba8f" stroke-width="1" stroke-opacity="0.9" stroke-linejoin="round"/><polyline points="679.8,210.5 685.7,218.2 691.5,219.1 697.4,219.6 703.2,219.6 709.1,219.1 715.0,219.3 720.8,219.6 726.7,209.3" fill="none" stroke="#f9ba8f" stroke-width="1" stroke-opacity="0.9" stroke-linejoin="round"/><polyline points="181.6,210.9 187.4,219.6 193.3,219.6" fill="none" stroke="#96d98d" stroke-width="1" stroke-opacity="0.9" stroke-linejoin="round"/><polyline points="205.0,219.1 210.9,218.2 216.7,218.7 222.6,209.3" fill="none" stroke="#96d98d" stroke-width="1" stroke-opacity="0.9" stroke-linejoin="round"/><polyline points="298.8,219.1 304.7,218.7 310.5,219.1 316.4,215.8" fill="none" stroke="#96d98d" stroke-width="1" stroke-opacity="0.9" stroke-linejoin="round"/><polyline points="486.4,218.2 492.2,212.0 498.1,219.3" fill="none" stroke="#96d98d" stroke-width="1" stroke-opacity="0.9" stroke-linejoin="round"/><polyline points="586.0,218.7 591.9,219.3 597.7,207.1" fill="none" stroke="#96d98d" stroke-width="1" stroke-opacity="0.9" stroke-linejoin="round"/><polyline points="627.1,219.1 632.9,219.3" fill="none" stroke="#96d98d" stroke-width="1" stroke-opacity="0.9" stroke-linejoin="round"/><polyline points="662.2,219.1 668.1,218.7 673.9,214.0 679.8,219.3" fill="none" stroke="#96d98d" stroke-width="1" stroke-opacity="0.9" stroke-linejoin="round"/><polyline points="826.3,219.3 832.2,218.2 838.1,218.2 843.9,219.6 849.8,218.7 855.6,212.9 861.5,207.8 867.4,212.0 873.2,219.3" fill="none" stroke="#96d98d" stroke-width="1" stroke-opacity="0.9" stroke-linejoin="round"/><polyline points="52.6,219.6 58.5,219.6" fill="none" stroke="#ffcb7d" stroke-width="1" stroke-opacity="0.9" stroke-linejoin="round"/><polyline points="87.8,211.7 93.7,219.6 99.5,218.2 105.4,219.1 111.2,219.1 117.1,219.1 123.0,218.7 128.8,201.3 134.7,218.7" fill="none" stroke="#ffcb7d" stroke-width="1" stroke-opacity="0.9" stroke-linejoin="round"/><polyline points="240.2,211.8 246.1,218.7 251.9,197.5 257.8,219.6 263.6,214.7 269.5,213.1 275.4,219.1 281.2,218.7 287.1,219.1" fill="none" stroke="#ffcb7d" stroke-width="1" stroke-opacity="0.9" stroke-linejoin="round"/><polyline points="357.4,218.7 363.3,218.7 369.1,219.6" fill="none" stroke="#ffcb7d" stroke-width="1" stroke-opacity="0.9" stroke-linejoin="round"/><polyline points="398.5,219.1 404.3,218.2 410.2,218.2 416.0,216.8 421.9,214.4 427.8,218.2 433.6,219.3 439.5,208.6 445.3,216.4" fill="none" stroke="#ffcb7d" stroke-width="1" stroke-opacity="0.9" stroke-linejoin="round"/><polyline points="462.9,219.1 468.8,219.3 474.7,218.7 480.5,219.6 486.4,219.1 492.2,214.6 498.1,219.3 504.0,216.3 509.8,218.2" fill="none" stroke="#ffcb7d" stroke-width="1" stroke-opacity="0.9" stroke-linejoin="round"/><polyline points="550.9,219.6 556.7,219.1" fill="none" stroke="#ffcb7d" stroke-width="1" stroke-opacity="0.9" stroke-linejoin="round"/><polyline points="785.3,218.2 791.2,218.2 797.0,218.2 802.9,218.2" fill="none" stroke="#ffcb7d" stroke-width="1" stroke-opacity="0.9" stroke-linejoin="round"/><polyline points="826.3,219.1 832.2,217.5 838.1,219.6" fill="none" stroke="#ffcb7d" stroke-width="1" stroke-opacity="0.9" stroke-linejoin="round"/><polyline points="76.1,208.7 81.9,219.6 87.8,216.6" fill="none" stroke="#d683ce" stroke-width="1" stroke-opacity="0.9" stroke-linejoin="round"/><polyline points="117.1,219.1 123.0,218.7 128.8,217.3 134.7,218.2" fill="none" stroke="#d683ce" stroke-width="1" stroke-opacity="0.9" stroke-linejoin="round"/><polyline points="275.4,218.7 281.2,209.2 287.1,217.4 292.9,218.7" fill="none" stroke="#d683ce" stroke-width="1" stroke-opacity="0.9" stroke-linejoin="round"/><polyline points="351.6,218.7 357.4,219.6 363.3,218.7 369.1,219.6" fill="none" stroke="#d683ce" stroke-width="1" stroke-opacity="0.9" stroke-linejoin="round"/><polyline points="439.5,218.7 445.3,217.3" fill="none" stroke="#d683ce" stroke-width="1" stroke-opacity="0.9" stroke-linejoin="round"/><polyline points="474.7,219.3 480.5,219.6 486.4,217.0 492.2,219.6 498.1,218.7 504.0,217.3" fill="none" stroke="#d683ce" stroke-width="1" stroke-opacity="0.9" stroke-linejoin="round"/><polyline points="574.3,219.1 580.2,218.7 586.0,219.1 591.9,218.2 597.7,215.1 603.6,219.3 609.5,214.7 615.3,216.8 621.2,219.6" fill="none" stroke="#d683ce" stroke-width="1" stroke-opacity="0.9" stroke-linejoin="round"/><polyline points="638.8,218.7 644.6,218.2 650.5,219.1 656.4,218.2 662.2,219.1 668.1,219.6 673.9,218.2 679.8,217.7 685.7,218.7" fill="none" stroke="#d683ce" stroke-width="1" stroke-opacity="0.9" stroke-linejoin="round"/><polyline points="750.1,218.7 756.0,219.3 761.9,218.7 767.7,217.3 773.6,219.6 779.4,215.9" fill="none" stroke="#d683ce" stroke-width="1" stroke-opacity="0.9" stroke-linejoin="round"/><polyline points="791.2,217.2 797.0,219.1 802.9,215.7 808.8,219.3 814.6,218.7 820.5,219.6 826.3,210.7 832.2,219.1 838.1,216.1" fill="none" stroke="#d683ce" stroke-width="1" stroke-opacity="0.9" stroke-linejoin="round"/><polyline points="58.5,215.0 64.3,219.1 70.2,219.3" fill="none" stroke="#8ab8ff" stroke-width="1" stroke-opacity="0.9" stroke-linejoin="round"/><polyline points="111.2,219.1 117.1,218.2 123.0,219.3 128.8,219.3" fill="none" stroke="#8ab8ff" stroke-width="1" stroke-opacity="0.9" stroke-linejoin="round"/><polyline points="158.1,219.6 164.0,219.1 169.9,219.3" fill="none" stroke="#8ab8ff" stroke-width="1" stroke-opacity="0.9" stroke-linejoin="round"/><polyline points="228.5,219.1 234.3,219.6 240.2,215.9 246.1,212.8 251.9,219.1 257.8,218.2 263.6,217.0 269.5,219.3 275.4,219.1" fill="none" stroke="#8ab8ff" stroke-width="1" stroke-opacity="0.9" stroke-linejoin="round"/><polyline points="304.7,219.1 310.5,218.7" fill="none" stroke="#8ab8ff" stroke-width="1" stroke-opacity="0.9" stroke-linejoin="round"/><polyline points="328.1,217.1 334.0,216.6 339.8,218.2" fill="none" stroke="#8ab8ff" stroke-width="1" stroke-opacity="0.9" stroke-linejoin="round"/><polyline points="386.7,219.6 392.6,218.2 398.5,219.3 404.3,219.1" fill="none" stroke="#8ab8ff" stroke-width="1" stroke-opacity="0.9" stroke-linejoin="round"/><polyline points="416.0,214.9 421.9,219.6 427.8,218.7" fill="none" stroke="#8ab8ff" stroke-width="1" stroke-opacity="0.9" stroke-linejoin="round"/><polyline points="509.8,218.7 515.7,218.2 521.5,218.2 527.4,219.3 533.3,218.2 539.1,219.3 545.0,208.7 550.9,219.3 556.7,217.8" fill="none" stroke="#8ab8ff" stroke-width="1" stroke-opacity="0.9" stroke-linejoin="round"/><polyline points="568.4,215.1 574.3,219.3 580.2,219.3 586.0,219.1 591.9,206.3 597.7,219.6" fill="none" stroke="#8ab8ff" stroke-width="1" stroke-opacity="0.9" stroke-linejoin="round"/><polyline points="76.1,219.3 81.9,218.7 87.8,217.7 93.7,217.2 99.5,219.3 105.4,219.1" fill="none" stroke="#e02f44" stroke-width="1" stroke-opacity="0.9" stroke-linejoin="round"/><polyline points="251.9,217.5 257.8,218.7 263.6,218.2" fill="none" stroke="#e02f44" stroke-width="1" stroke-opacity="0.9" stroke-linejoin="round"/><polyline points="351.6,208.5 357.4,219.3 363.3,217.6" fill="none" stroke="#e02f44" stroke-width="1" stroke-opacity="0.9" stroke-linejoin="round"/><polyline points="386.7,219.1 392.6,218.7 398.5,218.7 404.3,219.1" fill="none" stroke="#e02f44" stroke-width="1" stroke-opacity="0.9" stroke-linejoin="round"/><polyline points="416.0,214.7 421.9,218.7 427.8,218.2 433.6,218.2 439.5,219.6 445.3,219.1" fill="none" stroke="#e02f44" stroke-width="1" stroke-opacity="0.9" stroke-linejoin="round"/><polyline points="562.6,218.7 568.4,219.6 574.3,218.7 580.2,215.1 586.0,208.0 591.9,219.6 597.7,219.1 603.6,218.7 609.5,217.8" fill="none" stroke="#e02f44" stroke-width="1" stroke-opacity="0.9" stroke-linejoin="round"/><polyline points="668.1,219.1 673.9,219.1 679.8,219.6 685.7,218.7" fill="none" stroke="#e02f44" stroke-width="1" stroke-opacity="0.9" stroke-linejoin="round"/><polyline points="808.8,217.3 814.6,219.6 820.5,219.3 826.3,219.1 832.2,211.1 838.1,218.2 843.9,214.0 849.8,219.1 855.6,210.1" fill="none" stroke="#e02f44" stroke-width="1" stroke-opacity="0.9" stroke-linejoin="round"/><polyline points="40.9,176.9 46.8,159.2 52.6,198.1 58.5,163.6 64.3,183.2 70.2,180.2 76.1,181.5 81.9,186.3 87.8,184.1 93.7,169.2 99.5,147.4 105.4,162.7 111.2,178.4 117.1,198.1 123.0,201.6 128.8,199.4 134.7,203.8 140.5,198.1 146.4,192.9 152.3,195.1 158.1,188.1 164.0,71.2 169.9,199.0 175.7,185.0 181.6,189.4 187.4,192.9 193.3,170.1 199.2,167.9 205.0,173.2 210.9,195.1 216.7,201.6 222.6,201.2 228.5,190.2 234.3,180.2 240.2,199.0 246.1,208.6 251.9,216.3 257.8,191.6 263.6,202.9 269.5,213.0 275.4,200.8 281.2,200.8 287.1,213.9 292.9,215.6 298.8,212.6 304.7,206.4 310.5,213.0 316.4,198.1 322.3,218.7 328.1,202.9 334.0,192.9 339.8,208.2 345.7,208.6 351.6,209.5 357.4,202.1 363.3,176.7 369.1,208.6 375.0,213.4 380.9,210.8 386.7,208.2 392.6,216.5 398.5,195.5 404.3,209.1 410.2,213.4 416.0,212.6 421.9,198.6 427.8,212.6 433.6,211.2 439.5,202.5 445.3,206.4 451.2,211.7 457.1,206.0 462.9,171.4 468.8,202.9 474.7,209.9 480.5,201.6 486.4,213.9 492.2,205.6 498.1,213.9 504.0,208.6 509.8,210.8 515.7,213.9 521.5,215.6 527.4,207.8 533.3,213.4 539.1,198.6 545.0,213.4 550.9,216.9 556.7,211.7 562.6,160.5 568.4,212.6 574.3,191.6 580.2,200.3 586.0,209.5 591.9,213.4 597.7,206.9 603.6,214.8 609.5,212.6 615.3,154.4 621.2,198.1 627.1,209.1 632.9,209.5 638.8,208.2 644.6,200.8 650.5,208.2 656.4,172.3 662.2,166.6 668.1,205.1 673.9,173.6 679.8,199.0 685.7,197.2 691.5,203.8 697.4,210.8 703.2,204.7 709.1,206.0 715.0,198.1 720.8,193.3 726.7,202.1 732.6,207.8 738.4,166.6 744.3,210.8 750.1,209.5 756.0,211.7 761.9,214.8 767.7,207.3 773.6,198.6 779.4,210.4 785.3,206.0 791.2,201.6 797.0,198.6 802.9,211.7 808.8,207.8 814.6,207.8 820.5,210.8 826.3,206.0 832.2,203.8 838.1,185.4 843.9,195.9 849.8,213.9 855.6,207.3 861.5,200.3 867.4,209.1 873.2,205.1 879.1,185.4" fill="none" stroke="#ffa060" stroke-width="1.45" stroke-opacity="1" stroke-linejoin="round"/><path d="M767.7 217.0 L770.0 219.3 L767.7 221.6 L765.4 219.3Z" fill="#9ac48a"/><path d="M879.1 215.5 L881.4 217.8 L879.1 220.1 L876.8 217.8Z" fill="#9ac48a"/><path d="M164.0 215.9 L166.3 218.2 L164.0 220.6 L161.7 218.2Z" fill="#f2cc0c"/><path d="M644.6 215.2 L646.9 217.5 L644.6 219.8 L642.3 217.5Z" fill="#f2cc0c"/><path d="M767.7 206.7 L770.0 209.0 L767.7 211.3 L765.4 209.0Z" fill="#f2cc0c"/><path d="M879.1 205.1 L881.4 207.4 L879.1 209.7 L876.8 207.4Z" fill="#f2cc0c"/><path d="M76.1 216.4 L78.4 218.7 L76.1 221.0 L73.8 218.7Z" fill="#e07bd0"/><path d="M351.6 212.6 L353.9 214.9 L351.6 217.2 L349.3 214.9Z" fill="#e07bd0"/><path d="M861.5 215.9 L863.8 218.2 L861.5 220.6 L859.2 218.2Z" fill="#e07bd0"/><path d="M199.2 217.0 L201.5 219.3 L199.2 221.6 L196.9 219.3Z" fill="#5ec4da"/><path d="M263.6 217.0 L265.9 219.3 L263.6 221.6 L261.3 219.3Z" fill="#5ec4da"/><path d="M380.9 216.4 L383.2 218.7 L380.9 221.0 L378.6 218.7Z" fill="#5ec4da"/><path d="M404.3 217.0 L406.6 219.3 L404.3 221.6 L402.0 219.3Z" fill="#5ec4da"/><path d="M832.2 215.9 L834.5 218.2 L832.2 220.6 L829.9 218.2Z" fill="#5ec4da"/><path d="M849.8 215.9 L852.1 218.2 L849.8 220.6 L847.5 218.2Z" fill="#5ec4da"/><path d="M879.1 210.1 L881.4 212.4 L879.1 214.7 L876.8 212.4Z" fill="#5ec4da"/><path d="M205.0 215.9 L207.3 218.2 L205.0 220.6 L202.7 218.2Z" fill="#ff9830"/><path d="M292.9 217.3 L295.2 219.6 L292.9 221.9 L290.6 219.6Z" fill="#ff9830"/><path d="M310.5 215.9 L312.8 218.2 L310.5 220.6 L308.2 218.2Z" fill="#ff9830"/><path d="M322.3 217.0 L324.6 219.3 L322.3 221.6 L320.0 219.3Z" fill="#ff9830"/><path d="M480.5 216.4 L482.8 218.7 L480.5 221.0 L478.2 218.7Z" fill="#ff9830"/><path d="M556.7 215.9 L559.0 218.2 L556.7 220.6 L554.4 218.2Z" fill="#ff9830"/><path d="M644.6 216.4 L646.9 218.7 L644.6 221.0 L642.3 218.7Z" fill="#ff9830"/><path d="M76.1 217.0 L78.4 219.3 L76.1 221.6 L73.8 219.3Z" fill="#c4a2e6"/><path d="M87.8 217.0 L90.1 219.3 L87.8 221.6 L85.5 219.3Z" fill="#c4a2e6"/><path d="M398.5 215.2 L400.8 217.5 L398.5 219.8 L396.2 217.5Z" fill="#c4a2e6"/><path d="M421.9 213.9 L424.2 216.2 L421.9 218.5 L419.6 216.2Z" fill="#c4a2e6"/><path d="M492.2 216.4 L494.5 218.7 L492.2 221.0 L489.9 218.7Z" fill="#c4a2e6"/><path d="M597.7 215.9 L600.0 218.2 L597.7 220.6 L595.4 218.2Z" fill="#c4a2e6"/><path d="M679.8 206.7 L682.1 209.0 L679.8 211.3 L677.5 209.0Z" fill="#c4a2e6"/><path d="M761.9 217.3 L764.2 219.6 L761.9 221.9 L759.6 219.6Z" fill="#c4a2e6"/><path d="M76.1 217.0 L78.4 219.3 L76.1 221.6 L73.8 219.3Z" fill="#e0b400"/><path d="M281.2 216.4 L283.5 218.7 L281.2 221.0 L278.9 218.7Z" fill="#e0b400"/><path d="M410.2 216.8 L412.5 219.1 L410.2 221.4 L407.9 219.1Z" fill="#e0b400"/><path d="M439.5 216.4 L441.8 218.7 L439.5 221.0 L437.2 218.7Z" fill="#e0b400"/><path d="M656.4 212.2 L658.7 214.5 L656.4 216.8 L654.1 214.5Z" fill="#e0b400"/><path d="M832.2 216.4 L834.5 218.7 L832.2 221.0 L829.9 218.7Z" fill="#e0b400"/><path d="M70.2 216.4 L72.5 218.7 L70.2 221.0 L67.9 218.7Z" fill="#3274d9"/><path d="M81.9 213.6 L84.2 215.9 L81.9 218.2 L79.6 215.9Z" fill="#3274d9"/><path d="M123.0 216.4 L125.3 218.7 L123.0 221.0 L120.7 218.7Z" fill="#3274d9"/><path d="M146.4 217.0 L148.7 219.3 L146.4 221.6 L144.1 219.3Z" fill="#3274d9"/><path d="M205.0 217.3 L207.3 219.6 L205.0 221.9 L202.7 219.6Z" fill="#3274d9"/><path d="M287.1 194.0 L289.4 196.3 L287.1 198.6 L284.8 196.3Z" fill="#3274d9"/><path d="M328.1 215.3 L330.4 217.6 L328.1 219.9 L325.8 217.6Z" fill="#3274d9"/><path d="M457.1 216.8 L459.4 219.1 L457.1 221.4 L454.8 219.1Z" fill="#3274d9"/><path d="M498.1 214.6 L500.4 216.9 L498.1 219.2 L495.8 216.9Z" fill="#3274d9"/><path d="M603.6 217.3 L605.9 219.6 L603.6 221.9 L601.3 219.6Z" fill="#3274d9"/><path d="M375.0 216.8 L377.3 219.1 L375.0 221.4 L372.7 219.1Z" fill="#c15c17"/><path d="M474.7 214.9 L477.0 217.2 L474.7 219.5 L472.4 217.2Z" fill="#c15c17"/><path d="M550.9 206.5 L553.2 208.8 L550.9 211.1 L548.6 208.8Z" fill="#c15c17"/><path d="M591.9 212.5 L594.2 214.8 L591.9 217.1 L589.6 214.8Z" fill="#c15c17"/><path d="M650.5 216.8 L652.8 219.1 L650.5 221.4 L648.2 219.1Z" fill="#c15c17"/><path d="M738.4 211.8 L740.7 214.1 L738.4 216.4 L736.1 214.1Z" fill="#c15c17"/><path d="M797.0 216.8 L799.3 219.1 L797.0 221.4 L794.7 219.1Z" fill="#c15c17"/><path d="M81.9 216.4 L84.2 218.7 L81.9 221.0 L79.6 218.7Z" fill="#f9ba8f"/><path d="M181.6 216.8 L183.9 219.1 L181.6 221.4 L179.3 219.1Z" fill="#f9ba8f"/><path d="M292.9 216.4 L295.2 218.7 L292.9 221.0 L290.6 218.7Z" fill="#f9ba8f"/><path d="M322.3 214.4 L324.6 216.7 L322.3 219.0 L320.0 216.7Z" fill="#f9ba8f"/><path d="M363.3 217.3 L365.6 219.6 L363.3 221.9 L361.0 219.6Z" fill="#f9ba8f"/><path d="M380.9 215.9 L383.2 218.2 L380.9 220.6 L378.6 218.2Z" fill="#f9ba8f"/><path d="M404.3 216.8 L406.6 219.1 L404.3 221.4 L402.0 219.1Z" fill="#f9ba8f"/><path d="M445.3 217.3 L447.6 219.6 L445.3 221.9 L443.0 219.6Z" fill="#f9ba8f"/><path d="M492.2 212.4 L494.5 214.7 L492.2 217.0 L489.9 214.7Z" fill="#f9ba8f"/><path d="M568.4 217.3 L570.7 219.6 L568.4 221.9 L566.1 219.6Z" fill="#f9ba8f"/><path d="M738.4 217.0 L740.7 219.3 L738.4 221.6 L736.1 219.3Z" fill="#f9ba8f"/><path d="M779.4 215.9 L781.7 218.2 L779.4 220.6 L777.1 218.2Z" fill="#f9ba8f"/><path d="M802.9 205.4 L805.2 207.7 L802.9 210.0 L800.6 207.7Z" fill="#f9ba8f"/><path d="M76.1 216.8 L78.4 219.1 L76.1 221.4 L73.8 219.1Z" fill="#96d98d"/><path d="M164.0 216.4 L166.3 218.7 L164.0 221.0 L161.7 218.7Z" fill="#96d98d"/><path d="M240.2 216.8 L242.5 219.1 L240.2 221.4 L237.9 219.1Z" fill="#96d98d"/><path d="M357.4 216.8 L359.7 219.1 L357.4 221.4 L355.1 219.1Z" fill="#96d98d"/><path d="M445.3 214.4 L447.6 216.7 L445.3 219.0 L443.0 216.7Z" fill="#96d98d"/><path d="M468.8 217.0 L471.1 219.3 L468.8 221.6 L466.5 219.3Z" fill="#96d98d"/><path d="M609.5 217.3 L611.8 219.6 L609.5 221.9 L607.2 219.6Z" fill="#96d98d"/><path d="M697.4 215.9 L699.7 218.2 L697.4 220.6 L695.1 218.2Z" fill="#96d98d"/><path d="M738.4 217.3 L740.7 219.6 L738.4 221.9 L736.1 219.6Z" fill="#96d98d"/><path d="M797.0 216.8 L799.3 219.1 L797.0 221.4 L794.7 219.1Z" fill="#96d98d"/><path d="M808.8 216.4 L811.1 218.7 L808.8 221.0 L806.5 218.7Z" fill="#96d98d"/><path d="M222.6 213.0 L224.9 215.3 L222.6 217.6 L220.3 215.3Z" fill="#ffcb7d"/><path d="M316.4 216.4 L318.7 218.7 L316.4 221.0 L314.1 218.7Z" fill="#ffcb7d"/><path d="M586.0 216.4 L588.3 218.7 L586.0 221.0 L583.7 218.7Z" fill="#ffcb7d"/><path d="M644.6 214.9 L646.9 217.2 L644.6 219.5 L642.3 217.2Z" fill="#ffcb7d"/><path d="M703.2 215.9 L705.5 218.2 L703.2 220.6 L700.9 218.2Z" fill="#ffcb7d"/><path d="M761.9 215.9 L764.2 218.2 L761.9 220.6 L759.6 218.2Z" fill="#ffcb7d"/><path d="M855.6 216.8 L857.9 219.1 L855.6 221.4 L853.3 219.1Z" fill="#ffcb7d"/><path d="M158.1 216.8 L160.4 219.1 L158.1 221.4 L155.8 219.1Z" fill="#d683ce"/><path d="M246.1 216.4 L248.4 218.7 L246.1 221.0 L243.8 218.7Z" fill="#d683ce"/><path d="M427.8 213.9 L430.1 216.2 L427.8 218.5 L425.5 216.2Z" fill="#d683ce"/><path d="M462.9 217.3 L465.2 219.6 L462.9 221.9 L460.6 219.6Z" fill="#d683ce"/><path d="M533.3 214.9 L535.6 217.2 L533.3 219.5 L531.0 217.2Z" fill="#d683ce"/><path d="M556.7 217.3 L559.0 219.6 L556.7 221.9 L554.4 219.6Z" fill="#d683ce"/><path d="M709.1 212.4 L711.4 214.7 L709.1 217.0 L706.8 214.7Z" fill="#d683ce"/><path d="M867.4 211.9 L869.7 214.2 L867.4 216.5 L865.1 214.2Z" fill="#d683ce"/><path d="M40.9 214.4 L43.2 216.7 L40.9 219.0 L38.6 216.7Z" fill="#8ab8ff"/><path d="M87.8 217.3 L90.1 219.6 L87.8 221.9 L85.5 219.6Z" fill="#8ab8ff"/><path d="M287.1 208.9 L289.4 211.2 L287.1 213.5 L284.8 211.2Z" fill="#8ab8ff"/><path d="M369.1 215.1 L371.4 217.4 L369.1 219.7 L366.8 217.4Z" fill="#8ab8ff"/><path d="M451.2 217.3 L453.5 219.6 L451.2 221.9 L448.9 219.6Z" fill="#8ab8ff"/><path d="M468.8 216.8 L471.1 219.1 L468.8 221.4 L466.5 219.1Z" fill="#8ab8ff"/><path d="M621.2 215.9 L623.5 218.2 L621.2 220.6 L618.9 218.2Z" fill="#8ab8ff"/><path d="M638.8 215.9 L641.1 218.2 L638.8 220.6 L636.5 218.2Z" fill="#8ab8ff"/><path d="M697.4 215.2 L699.7 217.5 L697.4 219.8 L695.1 217.5Z" fill="#8ab8ff"/><path d="M720.8 215.9 L723.1 218.2 L720.8 220.6 L718.5 218.2Z" fill="#8ab8ff"/><path d="M808.8 214.2 L811.1 216.5 L808.8 218.8 L806.5 216.5Z" fill="#8ab8ff"/><path d="M193.3 217.0 L195.6 219.3 L193.3 221.6 L191.0 219.3Z" fill="#e02f44"/><path d="M533.3 215.9 L535.6 218.2 L533.3 220.6 L531.0 218.2Z" fill="#e02f44"/><path d="M638.8 205.4 L641.1 207.7 L638.8 210.0 L636.5 207.7Z" fill="#e02f44"/><path d="M726.7 217.3 L729.0 219.6 L726.7 221.9 L724.4 219.6Z" fill="#e02f44"/><path d="M750.1 213.8 L752.4 216.1 L750.1 218.4 L747.8 216.1Z" fill="#e02f44"/></svg></div>
<div class="panel" style="left:935px;top:674px;width:375px;height:258px"><div class="ptitle">Top IPv4</div><div class="th" style="left:0;top:28px;width:187px;padding-left:6px;border-right:1px solid #141619">IP</div><div class="th r" style="left:187px;top:28px;width:186px;padding-right:26px">Packets (sum)</div><svg width="10" height="12" style="left:350px;top:38px" viewBox="0 0 10 12" fill="none" stroke="#33a2e5" stroke-width="1.6"><path d="M5 2.6v6.6M1.6 6.4L5 9.8 8.4 6.4"/></svg><div class="td" style="left:0;top:61px;width:187px;padding-left:6px;border-right:1px solid #202226">35.190.20.61</div><div class="td r" style="left:187px;top:61px;width:171.5px;padding-right:0px">7.15 K</div><div class="abs" style="left:357px;top:95px;width:8px;height:1px;background:#202226"></div><div class="td" style="left:0;top:96px;width:187px;padding-left:6px;border-right:1px solid #202226">192.168.0.114</div><div class="td r" style="left:187px;top:96px;width:171.5px;padding-right:0px">2.58 K</div><div class="abs" style="left:357px;top:130px;width:8px;height:1px;background:#202226"></div><div class="td" style="left:0;top:131px;width:187px;padding-left:6px;border-right:1px solid #202226">192.168.0.189</div><div class="td r" style="left:187px;top:131px;width:171.5px;padding-right:0px">1.46 K</div><div class="abs" style="left:357px;top:165px;width:8px;height:1px;background:#202226"></div><div class="td" style="left:0;top:166px;width:187px;padding-left:6px;border-right:1px solid #202226">216.239.32.10</div><div class="td r" style="left:187px;top:166px;width:171.5px;padding-right:0px">194</div><div class="abs" style="left:357px;top:200px;width:8px;height:1px;background:#202226"></div><div class="td" style="left:0;top:201px;width:187px;padding-left:6px;border-right:1px solid #202226">216.239.34.10</div><div class="td r" style="left:187px;top:201px;width:171.5px;padding-right:0px">130</div><div class="abs" style="left:357px;top:235px;width:8px;height:1px;background:#202226"></div><div class="td" style="left:0;top:236px;width:187px;padding-left:6px;border-right:1px solid #202226"></div><div class="td r" style="left:187px;top:236px;width:171.5px;padding-right:0px"> </div><div class="abs" style="left:357px;top:270px;width:8px;height:1px;background:#202226"></div><div class="abs" style="left:366px;top:62px;width:7px;height:49px;background:#45465a;border-radius:1px"></div><div class="abs" style="left:0;top:245px;width:373px;height:12px;background:#141619"></div></div>
<div class="panel" style="left:1318px;top:674px;width:528px;height:258px"><div class="ptitle">Top Geo</div><div class="th" style="left:0;top:28px;width:271px;padding-left:6px;border-right:1px solid #141619">Geo</div><div class="th r" style="left:271px;top:28px;width:255px;padding-right:26px">Packets (sum)</div><svg width="10" height="12" style="left:503px;top:38px" viewBox="0 0 10 12" fill="none" stroke="#33a2e5" stroke-width="1.6"><path d="M5 2.6v6.6M1.6 6.4L5 9.8 8.4 6.4"/></svg><div class="td" style="left:0;top:61px;width:271px;padding-left:6px;border-right:1px solid #202226">NA/United States</div><div class="td r" style="left:271px;top:61px;width:240.5px;padding-right:0px">9.85 K</div><div class="abs" style="left:510px;top:95px;width:8px;height:1px;background:#202226"></div><div class="td" style="left:0;top:96px;width:271px;padding-left:6px;border-right:1px solid #202226">Unknown</div><div class="td r" style="left:271px;top:96px;width:240.5px;padding-right:0px">4.27 K</div><div class="abs" style="left:510px;top:130px;width:8px;height:1px;background:#202226"></div><div class="td" style="left:0;top:131px;width:271px;padding-left:6px;border-right:1px solid #202226">NA/United States/CA/Mountain View</div><div class="td r" style="left:271px;top:131px;width:240.5px;padding-right:0px">770</div><div class="abs" style="left:510px;top:165px;width:8px;height:1px;background:#202226"></div><div class="td" style="left:0;top:166px;width:271px;padding-left:6px;border-right:1px solid #202226">EU</div><div class="td r" style="left:271px;top:166px;width:240.5px;padding-right:0px">230</div><div class="abs" style="left:510px;top:200px;width:8px;height:1px;background:#202226"></div><div class="td" style="left:0;top:201px;width:271px;padding-left:6px;border-right:1px solid #202226">NA/United States/FL</div><div class="td r" style="left:271px;top:201px;width:240.5px;padding-right:0px">192</div><div class="abs" style="left:510px;top:235px;width:8px;height:1px;background:#202226"></div><div class="td" style="left:0;top:236px;width:271px;padding-left:6px;border-right:1px solid #202226"></div><div class="td r" style="left:271px;top:236px;width:240.5px;padding-right:0px"> </div><div class="abs" style="left:510px;top:270px;width:8px;height:1px;background:#202226"></div><div class="abs" style="left:519px;top:62px;width:7px;height:49px;background:#45465a;border-radius:1px"></div><div class="abs" style="left:0;top:245px;width:526px;height:12px;background:#141619"></div></div>
<div class="panel" style="left:17px;top:940px;width:910px;height:258px"><div class="ptitle">Top IPs</div><svg width="908" height="200"><rect x="116" y="45" width="1" height="115" fill="#ffffff" fill-opacity="0.165"/><rect x="184" y="45" width="1" height="115" fill="#ffffff" fill-opacity="0.165"/><rect x="253" y="45" width="1" height="115" fill="#ffffff" fill-opacity="0.165"/><rect x="321" y="45" width="1" height="115" fill="#ffffff" fill-opacity="0.165"/><rect x="389" y="45" width="1" height="115" fill="#ffffff" fill-opacity="0.165"/><rect x="457" y="45" width="1" height="115" fill="#ffffff" fill-opacity="0.165"/><rect x="526" y="45" width="1" height="115" fill="#ffffff" fill-opacity="0.165"/><rect x="594" y="45" width="1" height="115" fill="#ffffff" fill-opacity="0.165"/><rect x="662" y="45" width="1" height="115" fill="#ffffff" fill-opacity="0.165"/><rect x="731" y="45" width="1" height="115" fill="#ffffff" fill-opacity="0.165"/><rect x="799" y="45" width="1" height="115" fill="#ffffff" fill-opacity="0.165"/><rect x="867" y="45" width="1" height="115" fill="#ffffff" fill-opacity="0.165"/><rect x="64" y="45" width="820" height="1" fill="#ffffff" fill-opacity="0.165"/><rect x="64" y="74" width="820" height="1" fill="#ffffff" fill-opacity="0.165"/><rect x="64" y="103" width="820" height="1" fill="#ffffff" fill-opacity="0.165"/><rect x="64" y="132" width="820" height="1" fill="#ffffff" fill-opacity="0.165"/><text class="ax" x="116.9" y="0" text-anchor="middle"></text><text class="ax" x="185.2" y="0" text-anchor="middle"></text><text class="ax" x="253.5" y="0" text-anchor="middle"></text><text class="ax" x="321.8" y="0" text-anchor="middle"></text><text class="ax" x="390.1" y="0" text-anchor="middle"></text><text class="ax" x="458.4" y="0" text-anchor="middle"></text><text class="ax" x="526.7" y="0" text-anchor="middle"></text><text class="ax" x="595.0" y="0" text-anchor="middle"></text><text class="ax" x="663.3" y="0" text-anchor="middle"></text><text class="ax" x="731.6" y="0" text-anchor="middle"></text><text class="ax" x="799.9" y="0" text-anchor="middle"></text><text class="ax" x="868.2" y="0" text-anchor="middle"></text><text class="ax" x="58" y="49.3" text-anchor="end">3 p/s</text><text class="ax" x="58" y="78.3" text-anchor="end">2.50 p/s</text><text class="ax" x="58" y="107.3" text-anchor="end">2 p/s</text><text class="ax" x="58" y="136.3" text-anchor="end">1.50 p/s</text><polygon points="179.7,159 184.4,50.6 189.1,159" fill="#b5510d" fill-opacity="0.28" stroke="#b0520e" stroke-width="1"/></svg></div>
<div class="panel" style="left:935px;top:940px;width:375px;height:258px"><div class="ptitle">Top IPv6</div><div class="th" style="left:0;top:28px;width:187px;padding-left:6px;border-right:1px solid #141619">IP</div><div class="th r" style="left:187px;top:28px;width:186px;padding-right:26px">Packets (sum)</div><svg width="10" height="12" style="left:350px;top:38px" viewBox="0 0 10 12" fill="none" stroke="#33a2e5" stroke-width="1.6"><path d="M5 2.6v6.6M1.6 6.4L5 9.8 8.4 6.4"/></svg><div class="td" style="left:0;top:61px;width:187px;padding-left:6px;border-right:1px solid #202226">ff02::1:2</div><div class="td r" style="left:187px;top:61px;width:171.5px;padding-right:0px">61</div><div class="abs" style="left:357px;top:95px;width:8px;height:1px;background:#202226"></div><div class="td" style="left:0;top:96px;width:187px;padding-left:6px;border-right:1px solid #202226">ff02::fb</div><div class="td r" style="left:187px;top:96px;width:171.5px;padding-right:0px">8</div><div class="abs" style="left:357px;top:130px;width:8px;height:1px;background:#202226"></div><div class="td" style="left:0;top:131px;width:187px;padding-left:6px;border-right:1px solid #202226"></div><div class="td r" style="left:187px;top:131px;width:171.5px;padding-right:0px"></div><div class="abs" style="left:357px;top:165px;width:8px;height:1px;background:#202226"></div></div>
<div class="panel" style="left:1318px;top:940px;width:528px;height:258px"><div class="ptitle">Top ASN</div><div class="th" style="left:0;top:28px;width:263px;padding-left:6px;border-right:1px solid #141619">Geo</div><div class="th r" style="left:263px;top:28px;width:263px;padding-right:26px">Packets (sum)</div><svg width="10" height="12" style="left:503px;top:38px" viewBox="0 0 10 12" fill="none" stroke="#33a2e5" stroke-width="1.6"><path d="M5 2.6v6.6M1.6 6.4L5 9.8 8.4 6.4"/></svg><div class="td" style="left:0;top:61px;width:263px;padding-left:6px;border-right:1px solid #202226">15169/GOOGLE</div><div class="td r" style="left:263px;top:61px;width:248.5px;padding-right:0px">7.92 K</div><div class="abs" style="left:510px;top:95px;width:8px;height:1px;background:#202226"></div><div class="td" style="left:0;top:96px;width:263px;padding-left:6px;border-right:1px solid #202226">Unknown</div><div class="td r" style="left:263px;top:96px;width:248.5px;padding-right:0px">4.29 K</div><div class="abs" style="left:510px;top:130px;width:8px;height:1px;background:#202226"></div><div class="td" style="left:0;top:131px;width:263px;padding-left:6px;border-right:1px solid #202226"></div><div class="td r" style="left:263px;top:131px;width:248.5px;padding-right:0px"></div><div class="abs" style="left:510px;top:165px;width:8px;height:1px;background:#202226"></div><div class="abs" style="left:519px;top:62px;width:7px;height:49px;background:#45465a;border-radius:1px"></div></div>
</div></body></html>
